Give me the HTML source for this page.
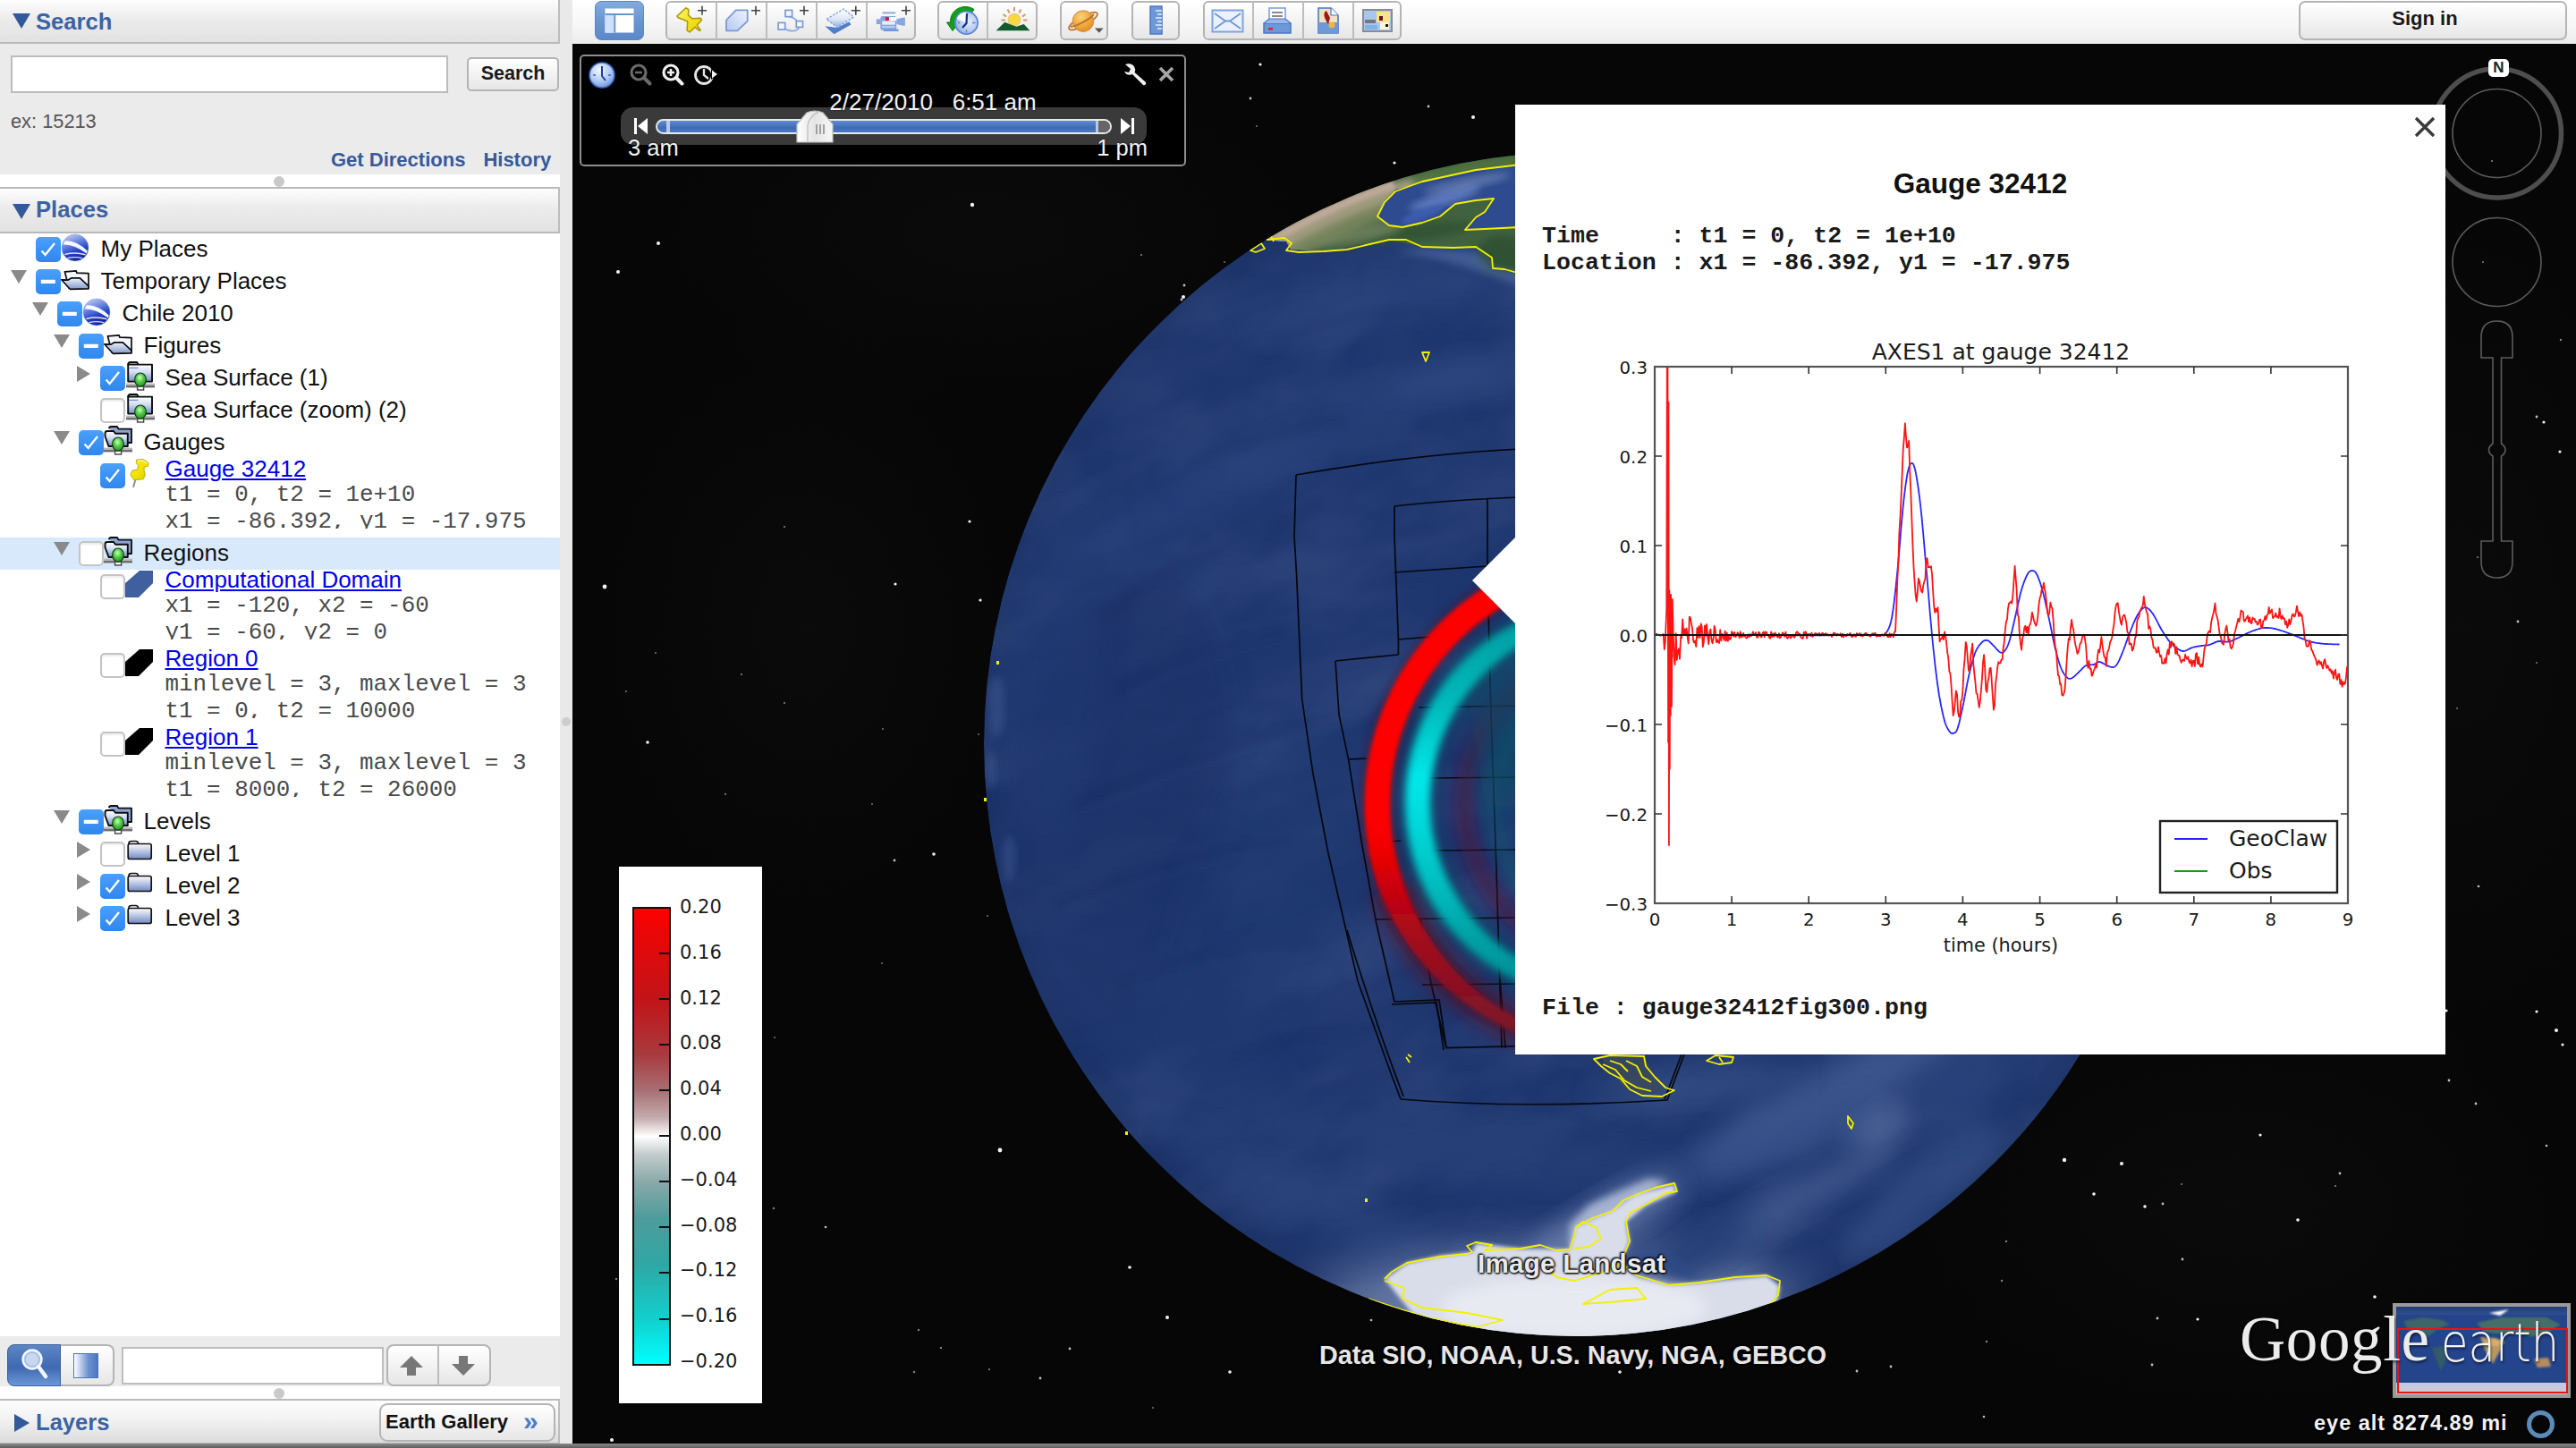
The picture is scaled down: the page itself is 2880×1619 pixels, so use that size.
<!DOCTYPE html>
<html lang="en"><head><meta charset="utf-8"><title>Google Earth</title>
<style>
*{box-sizing:border-box;margin:0;padding:0}
html,body{width:2880px;height:1619px;overflow:hidden;background:#050505}
body{position:relative;font-family:"Liberation Sans",sans-serif;color:#000}
.abs{position:absolute}
#left{position:absolute;left:0;top:0;width:626px;height:1615px;background:#fff;overflow:hidden}
#split{position:absolute;left:626px;top:0;width:14px;height:1615px;background:#e9e9e9}
#botline{position:absolute;left:0;top:1614px;width:2880px;height:5px;background:linear-gradient(#8a8a8a,#5e5e5e)}
.hdr{position:absolute;left:0;width:626px;background:linear-gradient(#fdfdfd,#ececec 45%,#e2e2e2);border-bottom:2px solid #b9b9b9;border-right:2px solid #bdbdbd}
.hdr .t{position:absolute;left:40px;font-weight:bold;color:#3b62a3;font-size:25.6px;letter-spacing:0}
.tri-d{position:absolute;width:0;height:0;border-left:10px solid transparent;border-right:10px solid transparent;border-top:17px solid #34599a}
.tri-r{position:absolute;width:0;height:0;border-top:10px solid transparent;border-bottom:10px solid transparent;border-left:17px solid #34599a}
.btn{position:absolute;border:2px solid #b4b4b4;border-radius:8px;background:linear-gradient(#ffffff,#f3f3f3 50%,#e6e6e6);}
.row{position:absolute;left:0;height:36px;font-size:26px;line-height:36px;white-space:nowrap;color:#111}
.mono{position:absolute;font-family:"Liberation Mono",monospace;font-size:25.9px;line-height:30px;color:#4a4a4a;white-space:pre;overflow:hidden}
.lnk{color:#0000ee;text-decoration:underline}
.cb{position:absolute;width:28px;height:28px;border-radius:5px}
.cb.on{background:linear-gradient(#4aa0fb,#2f86ee);}
.cb.off{background:#fff;border:2px solid #c4c4c4;box-shadow:inset 0 2px 2px rgba(0,0,0,.08)}
.tg{position:absolute;width:0;height:0}
.tg.d{border-left:9px solid transparent;border-right:9px solid transparent;border-top:15px solid #8a8a8a}
.tg.r{border-top:9px solid transparent;border-bottom:9px solid transparent;border-left:15px solid #8a8a8a}
#topbar{position:absolute;left:640px;top:0;width:2240px;height:49px;background:linear-gradient(#ffffff,#f6f6f6 60%,#ececec)}
#view{position:absolute;left:640px;top:49px;width:2240px;height:1566px;background:#060606;overflow:hidden}
</style></head>
<body>
<div id="view"><div class="abs" style="left:-640px;top:-49px;width:2880px;height:1619px">
<svg class="abs" style="left:0;top:0" width="2880" height="1619" viewBox="0 0 2880 1619"><defs><radialGradient id="neb" cx="0.5" cy="0.5" r="0.5"><stop offset="0" stop-color="#1a1a1a"/><stop offset="1" stop-color="#1a1a1a" stop-opacity="0"/></radialGradient></defs><ellipse cx="2750" cy="700" rx="260" ry="520" fill="url(#neb)" opacity=".22"/><ellipse cx="1100" cy="260" rx="420" ry="200" fill="url(#neb)" opacity=".22"/><ellipse cx="2500" cy="1350" rx="420" ry="260" fill="url(#neb)" opacity=".22"/><ellipse cx="900" cy="700" rx="260" ry="360" fill="url(#neb)" opacity=".22"/><circle cx="1087" cy="229" r="2.2" fill="#fff" opacity="0.95"/><circle cx="736" cy="272" r="2" fill="#fff" opacity="0.95"/><circle cx="691" cy="304" r="2" fill="#fff" opacity="0.95"/><circle cx="1323" cy="332" r="2" fill="#fff" opacity="0.95"/><circle cx="894" cy="76" r="1.6" fill="#fff" opacity="0.95"/><circle cx="1409" cy="72" r="1.6" fill="#fff" opacity="0.95"/><circle cx="1647" cy="131" r="2" fill="#fff" opacity="0.95"/><circle cx="676" cy="656" r="2.4" fill="#fff" opacity="0.95"/><circle cx="724" cy="830" r="1.8" fill="#fff" opacity="0.95"/><circle cx="1118" cy="1286" r="2.4" fill="#fff" opacity="0.95"/><circle cx="1305" cy="1473" r="2" fill="#fff" opacity="0.95"/><circle cx="1375" cy="1534" r="1.8" fill="#fff" opacity="0.95"/><circle cx="684" cy="1610" r="2" fill="#fff" opacity="0.95"/><circle cx="1526" cy="1297" r="1.8" fill="#fff" opacity="0.95"/><circle cx="1959" cy="1349" r="1.6" fill="#fff" opacity="0.95"/><circle cx="2527" cy="1269" r="1.6" fill="#fff" opacity="0.95"/><circle cx="2569" cy="1364" r="1.8" fill="#fff" opacity="0.95"/><circle cx="2655" cy="1450" r="1.8" fill="#fff" opacity="0.95"/><circle cx="2865" cy="1168" r="1.6" fill="#fff" opacity="0.95"/><circle cx="2862" cy="505" r="1.6" fill="#fff" opacity="0.95"/><circle cx="2844" cy="472" r="1.6" fill="#fff" opacity="0.95"/><circle cx="1001" cy="653" r="1.6" fill="#fff" opacity="0.95"/><circle cx="1084" cy="583" r="1.6" fill="#fff" opacity="0.95"/><circle cx="1096" cy="671" r="1.6" fill="#fff" opacity="0.95"/><circle cx="1044" cy="955" r="1.8" fill="#fff" opacity="0.95"/><circle cx="1000" cy="962" r="1.4" fill="#fff" opacity="0.75"/><circle cx="1263" cy="1417" r="1.8" fill="#fff" opacity="0.95"/><circle cx="1196" cy="1508" r="1.4" fill="#fff" opacity="0.75"/><circle cx="1163" cy="1541" r="1.4" fill="#fff" opacity="0.75"/><circle cx="2308" cy="1297" r="2.2" fill="#fff" opacity="0.95"/><circle cx="2372" cy="1301" r="2" fill="#fff" opacity="0.95"/><circle cx="2341" cy="1335" r="1.8" fill="#fff" opacity="0.95"/><circle cx="2398" cy="1349" r="1.8" fill="#fff" opacity="0.95"/><circle cx="2418" cy="1346" r="1.4" fill="#fff" opacity="0.75"/><circle cx="2440" cy="1408" r="1.4" fill="#fff" opacity="0.75"/><circle cx="2457" cy="1475" r="1.6" fill="#fff" opacity="0.95"/><circle cx="2735" cy="1130" r="1.6" fill="#fff" opacity="0.95"/><circle cx="2836" cy="1131" r="1.6" fill="#fff" opacity="0.95"/><circle cx="2858" cy="1152" r="2" fill="#fff" opacity="0.95"/><circle cx="2616" cy="1312" r="1.4" fill="#fff" opacity="0.75"/><circle cx="2738" cy="1208" r="1.4" fill="#fff" opacity="0.75"/><circle cx="2768" cy="1234" r="1.4" fill="#fff" opacity="0.75"/><circle cx="2412" cy="1474" r="1.4" fill="#fff" opacity="0.75"/><circle cx="2406" cy="1526" r="1.4" fill="#fff" opacity="0.75"/><circle cx="1811" cy="1534" r="1.8" fill="#fff" opacity="0.95"/><circle cx="2076" cy="1533" r="1.4" fill="#fff" opacity="0.75"/><circle cx="2114" cy="1528" r="1.4" fill="#fff" opacity="0.75"/><circle cx="2221" cy="1500" r="1.2" fill="#fff" opacity="0.5"/><circle cx="2243" cy="1388" r="1.2" fill="#fff" opacity="0.5"/><circle cx="2238" cy="1432" r="1.2" fill="#fff" opacity="0.5"/><circle cx="1027" cy="1487" r="1.2" fill="#fff" opacity="0.5"/><circle cx="1052" cy="1507" r="1.2" fill="#fff" opacity="0.5"/><circle cx="1022" cy="1534" r="1.2" fill="#fff" opacity="0.5"/><circle cx="865" cy="1351" r="1.2" fill="#fff" opacity="0.5"/><circle cx="689" cy="1430" r="1.2" fill="#fff" opacity="0.5"/><circle cx="1398" cy="110" r="1.4" fill="#fff" opacity="0.75"/><circle cx="1597" cy="119" r="1.4" fill="#fff" opacity="0.75"/><circle cx="1559" cy="182" r="1.6" fill="#fff" opacity="0.95"/><circle cx="1324" cy="319" r="1.4" fill="#fff" opacity="0.75"/><circle cx="1321" cy="335" r="1.4" fill="#fff" opacity="0.75"/><circle cx="2863" cy="380" r="1.2" fill="#fff" opacity="0.5"/><circle cx="2836" cy="466" r="1.4" fill="#fff" opacity="0.75"/><circle cx="2815" cy="695" r="1.4" fill="#fff" opacity="0.75"/><circle cx="1369" cy="293" r="0.9" fill="#fff" opacity="0.5"/><circle cx="811" cy="888" r="1.1" fill="#fff" opacity="0.5"/><circle cx="1944" cy="1465" r="1" fill="#fff" opacity="0.5"/><circle cx="733" cy="730" r="0.9" fill="#fff" opacity="0.5"/><circle cx="1184" cy="911" r="0.9" fill="#fff" opacity="0.5"/><circle cx="2486" cy="251" r="1" fill="#fff" opacity="0.5"/><circle cx="2050" cy="961" r="0.9" fill="#fff" opacity="0.5"/><circle cx="1931" cy="673" r="1" fill="#fff" opacity="0.5"/><circle cx="753" cy="1386" r="1.1" fill="#fff" opacity="0.5"/><circle cx="1580" cy="895" r="1.1" fill="#fff" opacity="0.5"/><circle cx="1894" cy="1114" r="0.9" fill="#fff" opacity="0.5"/><circle cx="1941" cy="1047" r="1.1" fill="#fff" opacity="0.5"/><circle cx="866" cy="1160" r="0.9" fill="#fff" opacity="0.5"/><circle cx="2024" cy="827" r="1.3" fill="#fff" opacity="0.75"/><circle cx="2375" cy="779" r="1.3" fill="#fff" opacity="0.75"/><circle cx="1453" cy="444" r="1" fill="#fff" opacity="0.5"/><circle cx="2202" cy="437" r="1.1" fill="#fff" opacity="0.5"/><circle cx="1816" cy="1412" r="1.3" fill="#fff" opacity="0.75"/><circle cx="1289" cy="1574" r="0.9" fill="#fff" opacity="0.5"/><circle cx="1786" cy="315" r="1.1" fill="#fff" opacity="0.5"/><circle cx="987" cy="815" r="0.9" fill="#fff" opacity="0.5"/><circle cx="2786" cy="180" r="1.1" fill="#fff" opacity="0.5"/><circle cx="1405" cy="601" r="1.3" fill="#fff" opacity="0.75"/><circle cx="1937" cy="765" r="0.9" fill="#fff" opacity="0.5"/><circle cx="2747" cy="792" r="0.9" fill="#fff" opacity="0.5"/><circle cx="785" cy="1144" r="1.3" fill="#fff" opacity="0.75"/><circle cx="1282" cy="656" r="1.1" fill="#fff" opacity="0.5"/><circle cx="700" cy="773" r="1" fill="#fff" opacity="0.5"/><circle cx="2006" cy="823" r="1" fill="#fff" opacity="0.5"/><circle cx="2355" cy="260" r="1" fill="#fff" opacity="0.5"/><circle cx="1533" cy="1476" r="1.3" fill="#fff" opacity="0.75"/><circle cx="829" cy="754" r="1.1" fill="#fff" opacity="0.5"/><circle cx="2611" cy="1326" r="1.1" fill="#fff" opacity="0.5"/><circle cx="2218" cy="1584" r="1.3" fill="#fff" opacity="0.75"/><circle cx="2776" cy="293" r="1" fill="#fff" opacity="0.5"/><circle cx="986" cy="1077" r="0.9" fill="#fff" opacity="0.5"/><circle cx="1727" cy="970" r="1.1" fill="#fff" opacity="0.5"/><circle cx="1276" cy="285" r="1.1" fill="#fff" opacity="0.5"/><circle cx="2004" cy="552" r="1" fill="#fff" opacity="0.5"/><circle cx="2183" cy="856" r="0.9" fill="#fff" opacity="0.5"/><circle cx="1664" cy="1406" r="1.3" fill="#fff" opacity="0.75"/><circle cx="1534" cy="669" r="1.3" fill="#fff" opacity="0.75"/><circle cx="2058" cy="156" r="0.9" fill="#fff" opacity="0.5"/><circle cx="2836" cy="741" r="0.9" fill="#fff" opacity="0.5"/><circle cx="1405" cy="141" r="0.9" fill="#fff" opacity="0.5"/><circle cx="1908" cy="889" r="1.1" fill="#fff" opacity="0.5"/><circle cx="2012" cy="169" r="1" fill="#fff" opacity="0.5"/><circle cx="2013" cy="290" r="1.1" fill="#fff" opacity="0.5"/><circle cx="2771" cy="991" r="1.3" fill="#fff" opacity="0.75"/><circle cx="923" cy="1372" r="1.3" fill="#fff" opacity="0.75"/><circle cx="1716" cy="542" r="1" fill="#fff" opacity="0.5"/><circle cx="877" cy="589" r="1.1" fill="#fff" opacity="0.5"/><circle cx="1713" cy="1129" r="0.9" fill="#fff" opacity="0.5"/><circle cx="1106" cy="1531" r="1.1" fill="#fff" opacity="0.5"/><circle cx="975" cy="899" r="0.9" fill="#fff" opacity="0.5"/><circle cx="2333" cy="521" r="0.9" fill="#fff" opacity="0.5"/><circle cx="2196" cy="463" r="1.1" fill="#fff" opacity="0.5"/><circle cx="2666" cy="610" r="1" fill="#fff" opacity="0.5"/><circle cx="1832" cy="1264" r="1.1" fill="#fff" opacity="0.5"/><circle cx="2063" cy="1007" r="1" fill="#fff" opacity="0.5"/><circle cx="2439" cy="1324" r="1" fill="#fff" opacity="0.5"/><circle cx="1094" cy="821" r="0.9" fill="#fff" opacity="0.5"/><circle cx="2847" cy="1281" r="1.3" fill="#fff" opacity="0.75"/><circle cx="1225" cy="1130" r="1.1" fill="#fff" opacity="0.5"/><circle cx="1643" cy="1508" r="1.1" fill="#fff" opacity="0.5"/><circle cx="2770" cy="623" r="1" fill="#fff" opacity="0.5"/><circle cx="877" cy="786" r="1.1" fill="#fff" opacity="0.5"/><circle cx="1104" cy="1024" r="0.9" fill="#fff" opacity="0.5"/><circle cx="1714" cy="1069" r="0.9" fill="#fff" opacity="0.5"/><circle cx="2503" cy="245" r="1.3" fill="#fff" opacity="0.75"/></svg>
<svg class="abs" style="left:0;top:0" width="2880" height="1619" viewBox="0 0 2880 1619">
<defs>
<clipPath id="gclip"><circle cx="1762" cy="832" r="662"/></clipPath>
<radialGradient id="ocean" cx="0.5" cy="0.5" r="0.5">
 <stop offset="0" stop-color="#1d356d"/><stop offset="0.75" stop-color="#1e366f"/><stop offset="0.95" stop-color="#1e366e"/><stop offset="1" stop-color="#1c3368"/>
</radialGradient>
<filter id="b2" x="-20%" y="-20%" width="140%" height="140%"><feGaussianBlur stdDeviation="2.2"/></filter>
<filter id="b4" x="-20%" y="-20%" width="140%" height="140%"><feGaussianBlur stdDeviation="4"/></filter>
<filter id="b8" x="-30%" y="-30%" width="160%" height="160%"><feGaussianBlur stdDeviation="8"/></filter>
<filter id="b14" x="-30%" y="-30%" width="160%" height="160%"><feGaussianBlur stdDeviation="14"/></filter>
<filter id="b30" x="-40%" y="-40%" width="180%" height="180%"><feGaussianBlur stdDeviation="30"/></filter>
<linearGradient id="redg" x1="0" y1="640" x2="0" y2="1180" gradientUnits="userSpaceOnUse">
 <stop offset="0" stop-color="#ff0000"/><stop offset="0.5" stop-color="#ff0000"/><stop offset="0.58" stop-color="#ee0002"/><stop offset="0.63" stop-color="#d40008"/><stop offset="0.7" stop-color="#b60616"/><stop offset="0.77" stop-color="#a00c1c"/><stop offset="0.85" stop-color="#8e1022"/><stop offset="0.92" stop-color="#801428"/><stop offset="1" stop-color="#741428"/>
</linearGradient>
<linearGradient id="cyg" x1="0" y1="700" x2="0" y2="1110" gradientUnits="userSpaceOnUse">
 <stop offset="0" stop-color="#00a3a6"/><stop offset="0.2" stop-color="#00bcbc"/><stop offset="0.42" stop-color="#00eeee"/><stop offset="0.62" stop-color="#00d2d2"/><stop offset="0.85" stop-color="#00a5a8"/><stop offset="1" stop-color="#008d95"/>
</linearGradient>
<linearGradient id="landg" x1="1400" y1="300" x2="1700" y2="200" gradientUnits="userSpaceOnUse">
 <stop offset="0" stop-color="#a89a82"/><stop offset="0.3" stop-color="#7f8663"/><stop offset="0.55" stop-color="#456643"/><stop offset="1" stop-color="#365c3a"/>
</linearGradient>
</defs>
<g clip-path="url(#gclip)">
<circle cx="1762" cy="832" r="662" fill="url(#ocean)"/>
<filter id="turb" x="0" y="0" width="100%" height="100%"><feTurbulence type="fractalNoise" baseFrequency="0.006 0.012" numOctaves="4" seed="5" result="n"/><feColorMatrix in="n" type="matrix" values="0 0 0 0 0.55  0 0 0 0 0.65  0 0 0 0 0.9  1.6 0 0 0 -0.62"/></filter>
<rect x="1100" y="170" width="1324" height="1324" filter="url(#turb)" opacity=".12" transform="rotate(-20 1762 832)"/>
<filter id="turb2" x="0" y="0" width="100%" height="100%"><feTurbulence type="fractalNoise" baseFrequency="0.008 0.016" numOctaves="3" seed="11" result="n"/><feColorMatrix in="n" type="matrix" values="0 0 0 0 0.03  0 0 0 0 0.06  0 0 0 0 0.2  1.8 0 0 0 -0.75"/></filter>
<rect x="1100" y="170" width="1324" height="1324" filter="url(#turb2)" opacity=".5" transform="rotate(-20 1762 832)"/>
<ellipse cx="1330" cy="560" rx="160" ry="30" transform="rotate(-25 1330 560)" fill="#2b4580" opacity="0.5" filter="url(#b14)"/>
<ellipse cx="1500" cy="470" rx="200" ry="28" transform="rotate(-20 1500 470)" fill="#2a447e" opacity="0.5" filter="url(#b14)"/>
<ellipse cx="1250" cy="900" rx="120" ry="260" transform="rotate(10 1250 900)" fill="#1c3268" opacity="0.5" filter="url(#b14)"/>
<ellipse cx="1420" cy="1000" rx="90" ry="200" transform="rotate(25 1420 1000)" fill="#1f376f" opacity="0.4" filter="url(#b14)"/>
<ellipse cx="1550" cy="330" rx="160" ry="30" transform="rotate(-12 1550 330)" fill="#2e4882" opacity="0.5" filter="url(#b14)"/>
<ellipse cx="1300" cy="1150" rx="200" ry="60" transform="rotate(40 1300 1150)" fill="#213a72" opacity="0.4" filter="url(#b14)"/>
<ellipse cx="1180" cy="760" rx="50" ry="200" transform="rotate(5 1180 760)" fill="#223b74" opacity="0.4" filter="url(#b14)"/>
<ellipse cx="1650" cy="420" rx="100" ry="24" transform="rotate(-5 1650 420)" fill="#314b84" opacity="0.5" filter="url(#b14)"/>
<ellipse cx="2050" cy="1225" rx="170" ry="34" transform="rotate(-28 2050 1225)" fill="#465f96" opacity="0.7" filter="url(#b14)"/>
<ellipse cx="2150" cy="1330" rx="110" ry="30" transform="rotate(-42 2150 1330)" fill="#39528a" opacity="0.6" filter="url(#b14)"/>
<ellipse cx="1950" cy="1290" rx="170" ry="26" transform="rotate(-18 1950 1290)" fill="#364f88" opacity="0.6" filter="url(#b14)"/>
<ellipse cx="2105" cy="1262" rx="40" ry="22" transform="rotate(-30 2105 1262)" fill="#6b80ae" opacity="0.55" filter="url(#b14)"/>
<ellipse cx="2000" cy="1345" rx="130" ry="22" transform="rotate(-28 2000 1345)" fill="#51699c" opacity="0.55" filter="url(#b14)"/>
<ellipse cx="1900" cy="1212" rx="120" ry="20" transform="rotate(-5 1900 1212)" fill="#39528a" opacity="0.55" filter="url(#b14)"/>
<ellipse cx="2190" cy="1215" rx="70" ry="40" transform="rotate(-50 2190 1215)" fill="#314a82" opacity="0.6" filter="url(#b14)"/>
<ellipse cx="1650" cy="1290" rx="240" ry="36" transform="rotate(8 1650 1290)" fill="#263f78" opacity="0.6" filter="url(#b14)"/>
<ellipse cx="1450" cy="1330" rx="160" ry="30" transform="rotate(25 1450 1330)" fill="#2a447e" opacity="0.5" filter="url(#b14)"/>
<path d="M1250 770 Q1350 720 1460 700" fill="none" stroke="#12224c" stroke-width="4" opacity=".22" filter="url(#b4)"/>
<path d="M1200 900 Q1340 840 1500 800" fill="none" stroke="#12224c" stroke-width="4" opacity=".22" filter="url(#b4)"/>
<path d="M1300 640 Q1400 600 1480 560" fill="none" stroke="#12224c" stroke-width="4" opacity=".22" filter="url(#b4)"/>
<path d="M1180 1010 Q1300 960 1440 940" fill="none" stroke="#12224c" stroke-width="4" opacity=".22" filter="url(#b4)"/>
<path d="M1250 1100 Q1350 1060 1470 1050" fill="none" stroke="#12224c" stroke-width="4" opacity=".22" filter="url(#b4)"/>
<path d="M1330 520 Q1420 480 1500 470" fill="none" stroke="#12224c" stroke-width="4" opacity=".22" filter="url(#b4)"/>
<path d="M1420 380 Q1500 350 1600 345" fill="none" stroke="#12224c" stroke-width="4" opacity=".22" filter="url(#b4)"/>
<path d="M1380 1180 Q1450 1150 1540 1150" fill="none" stroke="#12224c" stroke-width="4" opacity=".22" filter="url(#b4)"/>
<path d="M1230 690 Q1300 650 1350 600" fill="none" stroke="#12224c" stroke-width="4" opacity=".22" filter="url(#b4)"/>
<path d="M1500 640 Q1540 600 1600 590" fill="none" stroke="#12224c" stroke-width="4" opacity=".22" filter="url(#b4)"/>
<path d="M1260 778 Q1355 730 1462 708" fill="none" stroke="#3a548f" stroke-width="3" opacity=".2" filter="url(#b4)"/>
<path d="M1210 908 Q1345 850 1502 808" fill="none" stroke="#3a548f" stroke-width="3" opacity=".2" filter="url(#b4)"/>
<path d="M1190 1018 Q1305 968 1442 948" fill="none" stroke="#3a548f" stroke-width="3" opacity=".2" filter="url(#b4)"/>
<ellipse cx="1114" cy="790" rx="9" ry="34" fill="#5069a4" opacity=".35" filter="url(#b4)"/>
<ellipse cx="1128" cy="960" rx="8" ry="26" fill="#5069a4" opacity=".35" filter="url(#b4)"/>
<ellipse cx="1108" cy="860" rx="6" ry="20" fill="#5069a4" opacity=".35" filter="url(#b4)"/>
<path d="M1380 290 L1398 277 L1412 268 L1438 270 L1443 279 L1480 281 L1553 268 L1590 276 L1650 277 L1669 299 L1700 306 L1700 150 L1500 150 Z" fill="#41623f"/>
<ellipse cx="1560" cy="262" rx="90" ry="10" transform="rotate(-6 1560 262)" fill="#2f5030" opacity=".7" filter="url(#b4)"/>
<ellipse cx="1680" cy="285" rx="30" ry="22" fill="#2c4c2e" opacity=".7" filter="url(#b4)"/>
<ellipse cx="1520" cy="262" rx="50" ry="9" transform="rotate(-12 1520 262)" fill="#7d8c68" opacity=".7" filter="url(#b4)"/>
<clipPath id="landclip"><path d="M1380 290 L1398 277 L1412 268 L1438 270 L1443 279 L1480 281 L1553 268 L1590 276 L1650 277 L1669 299 L1700 306 L1700 150 L1500 150 Z"/></clipPath><g clip-path="url(#landclip)">
<path d="M1396.3 289.8 L1398.4 288.4 L1400.5 287.0 L1402.6 285.6 L1404.7 284.2 L1406.9 282.8 L1409.0 281.4 L1411.1 280.1 L1413.3 278.7 L1415.4 277.4 L1417.6 276.0 L1419.7 274.7 L1421.9 273.4 L1424.1 272.1 L1426.3 270.8 L1428.4 269.5 L1430.6 268.2 L1432.8 266.9 L1435.0 265.6 L1437.2 264.4 L1439.4 263.1 L1441.6 261.9 L1443.8 260.6 L1446.0 259.4 L1448.3 258.2 L1450.5 257.0 L1452.7 255.7 L1455.0 254.6 L1457.2 253.4 L1459.5 252.2 L1461.7 251.0 L1464.0 249.9 L1466.2 248.7 L1468.5 247.6 L1470.8 246.4 L1473.0 245.3 L1475.3 244.2 L1477.6 243.1 L1479.9 242.0 L1482.2 240.9 L1484.5 239.8 L1486.8 238.7 L1489.1 237.7 L1491.4 236.6 L1493.7 235.6 L1496.0 234.5 L1498.3 233.5 L1500.6 232.5 L1503.0 231.5 L1505.3 230.5 L1507.6 229.5 L1510.0 228.5 L1512.3 227.5 L1514.7 226.6 L1517.0 225.6 L1519.4 224.7 L1521.7 223.7 L1524.1 222.8 L1526.4 221.9 L1528.8 221.0 L1531.2 220.1 L1533.6 219.2 L1535.9 218.3 L1538.3 217.4 L1540.7 216.6 L1543.1 215.7 L1545.5 214.9 L1547.9 214.0 L1550.3 213.2 L1552.7 212.4 L1555.1 211.6 L1557.5 210.8 L1559.9 210.0 L1562.3 209.2 L1564.7 208.5 L1567.2 207.7 L1569.6 206.9 L1572.0 206.2 L1574.4 205.5 L1576.9 204.8 L1579.3 204.0 L1581.7 203.3 L1584.2 202.6 L1586.6 202.0 L1589.1 201.3 L1591.5 200.6 L1594.0 200.0 L1596.4 199.3 L1598.9 198.7 L1601.3 198.0 L1603.8 197.4 L1610.6 224.6 L1608.2 225.2 L1605.8 225.8 L1603.5 226.4 L1601.2 227.0 L1598.8 227.6 L1596.5 228.3 L1594.1 228.9 L1591.8 229.6 L1589.5 230.3 L1587.1 230.9 L1584.8 231.6 L1582.5 232.3 L1580.1 233.0 L1577.8 233.7 L1575.5 234.4 L1573.2 235.2 L1570.9 235.9 L1568.6 236.6 L1566.2 237.4 L1563.9 238.2 L1561.6 238.9 L1559.3 239.7 L1557.0 240.5 L1554.8 241.3 L1552.5 242.1 L1550.2 242.9 L1547.9 243.8 L1545.6 244.6 L1543.3 245.4 L1541.1 246.3 L1538.8 247.1 L1536.5 248.0 L1534.3 248.9 L1532.0 249.8 L1529.7 250.7 L1527.5 251.6 L1525.2 252.5 L1523.0 253.4 L1520.8 254.4 L1518.5 255.3 L1516.3 256.2 L1514.1 257.2 L1511.8 258.2 L1509.6 259.1 L1507.4 260.1 L1505.2 261.1 L1503.0 262.1 L1500.7 263.1 L1498.5 264.1 L1496.3 265.2 L1494.1 266.2 L1492.0 267.2 L1489.8 268.3 L1487.6 269.4 L1485.4 270.4 L1483.2 271.5 L1481.1 272.6 L1478.9 273.7 L1476.7 274.8 L1474.6 275.9 L1472.4 277.0 L1470.3 278.1 L1468.1 279.3 L1466.0 280.4 L1463.8 281.6 L1461.7 282.7 L1459.6 283.9 L1457.4 285.1 L1455.3 286.3 L1453.2 287.5 L1451.1 288.7 L1449.0 289.9 L1446.9 291.1 L1444.8 292.3 L1442.7 293.5 L1440.6 294.8 L1438.5 296.0 L1436.5 297.3 L1434.4 298.6 L1432.3 299.8 L1430.3 301.1 L1428.2 302.4 L1426.2 303.7 L1424.1 305.0 L1422.1 306.3 L1420.0 307.7 L1418.0 309.0 L1416.0 310.3 L1414.0 311.7 L1411.9 313.0 Z" fill="#7f8a62" opacity=".85" filter="url(#b4)"/>
<path d="M1402.5 278.5 L1404.4 277.3 L1406.2 276.1 L1408.0 274.9 L1409.9 273.8 L1411.7 272.6 L1413.6 271.5 L1415.4 270.3 L1417.3 269.2 L1419.1 268.1 L1421.0 266.9 L1422.8 265.8 L1424.7 264.7 L1426.6 263.6 L1428.5 262.5 L1430.3 261.4 L1432.2 260.3 L1434.1 259.2 L1436.0 258.1 L1437.9 257.1 L1439.8 256.0 L1441.7 254.9 L1443.6 253.9 L1445.5 252.8 L1447.4 251.8 L1449.3 250.8 L1451.2 249.7 L1453.2 248.7 L1455.1 247.7 L1457.0 246.7 L1459.0 245.7 L1460.9 244.7 L1462.8 243.7 L1464.8 242.7 L1466.7 241.7 L1468.7 240.8 L1470.6 239.8 L1472.6 238.9 L1474.5 237.9 L1476.5 237.0 L1478.4 236.0 L1480.4 235.1 L1482.4 234.2 L1484.3 233.2 L1486.3 232.3 L1488.3 231.4 L1490.3 230.5 L1492.3 229.6 L1494.3 228.7 L1496.2 227.9 L1498.2 227.0 L1500.2 226.1 L1502.2 225.3 L1504.2 224.4 L1506.2 223.6 L1508.2 222.7 L1510.3 221.9 L1512.3 221.1 L1514.3 220.3 L1516.3 219.4 L1518.3 218.6 L1520.3 217.8 L1522.4 217.0 L1524.4 216.3 L1526.4 215.5 L1528.5 214.7 L1530.5 213.9 L1532.5 213.2 L1534.6 212.4 L1536.6 211.7 L1538.7 210.9 L1540.7 210.2 L1542.8 209.5 L1544.8 208.8 L1546.9 208.0 L1548.9 207.3 L1551.0 206.6 L1553.1 205.9 L1555.1 205.3 L1557.2 204.6 L1559.3 203.9 L1561.3 203.2 L1563.4 202.6 L1565.5 201.9 L1567.6 201.3 L1569.6 200.7 L1571.7 200.0 L1573.8 199.4 L1575.9 198.8 L1578.0 198.2 L1580.1 197.6 L1585.0 214.9 L1583.0 215.5 L1581.0 216.1 L1578.9 216.7 L1576.9 217.3 L1574.9 217.9 L1572.9 218.5 L1570.8 219.1 L1568.8 219.8 L1566.8 220.4 L1564.8 221.0 L1562.8 221.7 L1560.8 222.4 L1558.8 223.0 L1556.8 223.7 L1554.8 224.4 L1552.7 225.1 L1550.8 225.8 L1548.8 226.5 L1546.8 227.2 L1544.8 227.9 L1542.8 228.6 L1540.8 229.3 L1538.8 230.0 L1536.8 230.8 L1534.8 231.5 L1532.9 232.3 L1530.9 233.0 L1528.9 233.8 L1526.9 234.6 L1525.0 235.4 L1523.0 236.1 L1521.0 236.9 L1519.1 237.7 L1517.1 238.5 L1515.2 239.3 L1513.2 240.2 L1511.3 241.0 L1509.3 241.8 L1507.4 242.7 L1505.4 243.5 L1503.5 244.3 L1501.6 245.2 L1499.6 246.1 L1497.7 246.9 L1495.8 247.8 L1493.8 248.7 L1491.9 249.6 L1490.0 250.5 L1488.1 251.4 L1486.2 252.3 L1484.3 253.2 L1482.4 254.1 L1480.5 255.0 L1478.6 256.0 L1476.7 256.9 L1474.8 257.8 L1472.9 258.8 L1471.0 259.7 L1469.1 260.7 L1467.2 261.7 L1465.3 262.7 L1463.5 263.6 L1461.6 264.6 L1459.7 265.6 L1457.9 266.6 L1456.0 267.6 L1454.1 268.6 L1452.3 269.7 L1450.4 270.7 L1448.6 271.7 L1446.7 272.7 L1444.9 273.8 L1443.1 274.8 L1441.2 275.9 L1439.4 276.9 L1437.6 278.0 L1435.7 279.1 L1433.9 280.2 L1432.1 281.3 L1430.3 282.3 L1428.5 283.4 L1426.7 284.5 L1424.9 285.6 L1423.1 286.8 L1421.3 287.9 L1419.5 289.0 L1417.7 290.1 L1415.9 291.3 L1414.1 292.4 L1412.3 293.6 Z" fill="#a79f84" opacity=".9" filter="url(#b4)"/>
<path d="M1410.7 269.7 L1412.2 268.8 L1413.7 267.8 L1415.3 266.9 L1416.8 266.0 L1418.3 265.0 L1419.9 264.1 L1421.4 263.2 L1423.0 262.2 L1424.5 261.3 L1426.1 260.4 L1427.6 259.5 L1429.2 258.6 L1430.7 257.7 L1432.3 256.8 L1433.8 255.9 L1435.4 255.0 L1437.0 254.1 L1438.5 253.3 L1440.1 252.4 L1441.7 251.5 L1443.3 250.6 L1444.9 249.8 L1446.4 248.9 L1448.0 248.1 L1449.6 247.2 L1451.2 246.4 L1452.8 245.5 L1454.4 244.7 L1456.0 243.9 L1457.6 243.0 L1459.2 242.2 L1460.8 241.4 L1462.4 240.6 L1464.0 239.8 L1465.6 238.9 L1467.2 238.1 L1468.8 237.3 L1470.4 236.6 L1472.1 235.8 L1473.7 235.0 L1475.3 234.2 L1476.9 233.4 L1478.5 232.6 L1480.2 231.9 L1481.8 231.1 L1483.4 230.4 L1485.1 229.6 L1486.7 228.9 L1488.3 228.1 L1490.0 227.4 L1491.6 226.6 L1493.3 225.9 L1494.9 225.2 L1496.6 224.5 L1498.2 223.7 L1499.9 223.0 L1501.5 222.3 L1503.2 221.6 L1504.8 220.9 L1506.5 220.2 L1508.2 219.5 L1509.8 218.8 L1511.5 218.1 L1513.2 217.5 L1514.8 216.8 L1516.5 216.1 L1518.2 215.5 L1519.8 214.8 L1521.5 214.1 L1523.2 213.5 L1524.9 212.9 L1526.6 212.2 L1528.2 211.6 L1529.9 210.9 L1531.6 210.3 L1533.3 209.7 L1535.0 209.1 L1536.7 208.5 L1538.4 207.8 L1540.1 207.2 L1541.8 206.6 L1543.5 206.0 L1545.2 205.5 L1546.9 204.9 L1548.6 204.3 L1550.3 203.7 L1552.0 203.1 L1553.7 202.6 L1555.4 202.0 L1557.1 201.4 L1560.2 211.0 L1558.5 211.5 L1556.8 212.1 L1555.2 212.6 L1553.5 213.2 L1551.8 213.8 L1550.1 214.3 L1548.4 214.9 L1546.8 215.5 L1545.1 216.1 L1543.4 216.7 L1541.8 217.3 L1540.1 217.9 L1538.4 218.5 L1536.8 219.1 L1535.1 219.7 L1533.4 220.3 L1531.8 220.9 L1530.1 221.6 L1528.5 222.2 L1526.8 222.8 L1525.2 223.5 L1523.5 224.1 L1521.9 224.8 L1520.2 225.4 L1518.6 226.1 L1516.9 226.7 L1515.3 227.4 L1513.6 228.1 L1512.0 228.8 L1510.4 229.4 L1508.7 230.1 L1507.1 230.8 L1505.5 231.5 L1503.8 232.2 L1502.2 232.9 L1500.6 233.6 L1498.9 234.3 L1497.3 235.0 L1495.7 235.8 L1494.1 236.5 L1492.5 237.2 L1490.9 238.0 L1489.2 238.7 L1487.6 239.4 L1486.0 240.2 L1484.4 240.9 L1482.8 241.7 L1481.2 242.4 L1479.6 243.2 L1478.0 244.0 L1476.4 244.8 L1474.8 245.5 L1473.2 246.3 L1471.7 247.1 L1470.1 247.9 L1468.5 248.7 L1466.9 249.5 L1465.3 250.3 L1463.7 251.1 L1462.2 251.9 L1460.6 252.7 L1459.0 253.5 L1457.4 254.4 L1455.9 255.2 L1454.3 256.0 L1452.8 256.9 L1451.2 257.7 L1449.6 258.6 L1448.1 259.4 L1446.5 260.3 L1445.0 261.1 L1443.4 262.0 L1441.9 262.8 L1440.3 263.7 L1438.8 264.6 L1437.3 265.5 L1435.7 266.4 L1434.2 267.2 L1432.7 268.1 L1431.1 269.0 L1429.6 269.9 L1428.1 270.8 L1426.5 271.7 L1425.0 272.7 L1423.5 273.6 L1422.0 274.5 L1420.5 275.4 L1419.0 276.4 L1417.5 277.3 L1416.0 278.2 Z" fill="#c2ab9c" opacity=".95" filter="url(#b2)"/>
<path d="M1579.8 196.6 L1581.0 196.3 L1582.3 195.9 L1583.5 195.6 L1584.7 195.2 L1586.0 194.9 L1587.2 194.5 L1588.4 194.2 L1589.7 193.9 L1590.9 193.5 L1592.2 193.2 L1593.4 192.9 L1594.6 192.5 L1595.9 192.2 L1597.1 191.9 L1598.4 191.6 L1599.6 191.3 L1600.8 190.9 L1602.1 190.6 L1603.3 190.3 L1604.6 190.0 L1605.8 189.7 L1607.1 189.4 L1608.3 189.1 L1609.6 188.8 L1610.8 188.5 L1612.1 188.2 L1613.3 187.9 L1614.6 187.7 L1615.8 187.4 L1617.1 187.1 L1618.3 186.8 L1619.6 186.5 L1620.8 186.3 L1622.1 186.0 L1623.3 185.7 L1624.6 185.4 L1625.8 185.2 L1627.1 184.9 L1628.3 184.7 L1629.6 184.4 L1630.8 184.1 L1632.1 183.9 L1633.4 183.6 L1634.6 183.4 L1635.9 183.1 L1637.1 182.9 L1638.4 182.7 L1639.7 182.4 L1640.9 182.2 L1642.2 182.0 L1643.4 181.7 L1644.7 181.5 L1646.0 181.3 L1647.2 181.0 L1648.5 180.8 L1649.7 180.6 L1651.0 180.4 L1652.3 180.2 L1653.5 180.0 L1654.8 179.8 L1656.1 179.5 L1657.3 179.3 L1658.6 179.1 L1659.9 178.9 L1661.1 178.7 L1662.4 178.5 L1663.7 178.4 L1664.9 178.2 L1666.2 178.0 L1667.5 177.8 L1668.7 177.6 L1670.0 177.4 L1671.3 177.3 L1672.5 177.1 L1673.8 176.9 L1675.1 176.7 L1676.4 176.6 L1677.6 176.4 L1678.9 176.2 L1680.2 176.1 L1681.4 175.9 L1682.7 175.8 L1684.0 175.6 L1685.3 175.5 L1686.5 175.3 L1687.8 175.2 L1689.1 175.0 L1690.4 174.9 L1691.6 174.8 L1692.9 174.6 L1694.2 186.6 L1692.9 186.7 L1691.7 186.8 L1690.4 187.0 L1689.2 187.1 L1687.9 187.2 L1686.7 187.4 L1685.4 187.5 L1684.2 187.7 L1682.9 187.8 L1681.7 188.0 L1680.4 188.1 L1679.2 188.3 L1677.9 188.5 L1676.7 188.6 L1675.4 188.8 L1674.2 189.0 L1672.9 189.1 L1671.7 189.3 L1670.4 189.5 L1669.2 189.7 L1667.9 189.9 L1666.7 190.0 L1665.4 190.2 L1664.2 190.4 L1663.0 190.6 L1661.7 190.8 L1660.5 191.0 L1659.2 191.2 L1658.0 191.4 L1656.7 191.6 L1655.5 191.8 L1654.3 192.0 L1653.0 192.2 L1651.8 192.4 L1650.5 192.6 L1649.3 192.9 L1648.1 193.1 L1646.8 193.3 L1645.6 193.5 L1644.3 193.8 L1643.1 194.0 L1641.9 194.2 L1640.6 194.4 L1639.4 194.7 L1638.2 194.9 L1636.9 195.2 L1635.7 195.4 L1634.5 195.7 L1633.2 195.9 L1632.0 196.2 L1630.8 196.4 L1629.5 196.7 L1628.3 196.9 L1627.1 197.2 L1625.8 197.4 L1624.6 197.7 L1623.4 198.0 L1622.1 198.2 L1620.9 198.5 L1619.7 198.8 L1618.5 199.1 L1617.2 199.4 L1616.0 199.6 L1614.8 199.9 L1613.6 200.2 L1612.3 200.5 L1611.1 200.8 L1609.9 201.1 L1608.7 201.4 L1607.4 201.7 L1606.2 202.0 L1605.0 202.3 L1603.8 202.6 L1602.6 202.9 L1601.3 203.2 L1600.1 203.5 L1598.9 203.8 L1597.7 204.1 L1596.5 204.5 L1595.2 204.8 L1594.0 205.1 L1592.8 205.4 L1591.6 205.8 L1590.4 206.1 L1589.2 206.4 L1588.0 206.8 L1586.7 207.1 L1585.5 207.5 L1584.3 207.8 L1583.1 208.1 Z" fill="#56793f" opacity=".8" filter="url(#b4)"/>
<ellipse cx="1422" cy="276" rx="16" ry="7" transform="rotate(-25 1422 276)" fill="#8e93a4" opacity=".8" filter="url(#b2)"/>
</g>
<path d="M1540 242 L1548 224 L1560 212 L1627 195 L1700 183 L1700 252 L1638 257 L1650 243 L1660 237 L1670 222 L1627 228 L1610 242 L1568 254 L1553 252 Z" fill="#2d4b8e"/>
<ellipse cx="1615" cy="222" rx="42" ry="7" transform="rotate(-17 1615 222)" fill="#6f8ad0" opacity=".75" filter="url(#b4)"/>
<ellipse cx="1640" cy="205" rx="50" ry="6" transform="rotate(-12 1640 205)" fill="#7f93c0" opacity=".6" filter="url(#b4)"/>
<ellipse cx="1590" cy="240" rx="26" ry="6" transform="rotate(-20 1590 240)" fill="#3f5fb4" opacity=".8" filter="url(#b2)"/>
<path d="M1560 280 Q1620 290 1668 308 L1700 320 L1700 306 L1669 299 L1650 280 L1590 279 Z" fill="#5a77b0" opacity=".55" filter="url(#b4)"/>
<ellipse cx="1740" cy="1460" rx="270" ry="62" fill="#8c9dc4" opacity=".7" filter="url(#b30)"/>
<ellipse cx="1790" cy="1368" rx="95" ry="26" transform="rotate(-30 1790 1368)" fill="#7388b6" opacity=".7" filter="url(#b14)"/><path d="M1755 1369 L1777 1347 L1810 1332 L1843 1318 L1865 1321 L1817 1354 L1803 1384 L1755 1398 Z" fill="#b4bfda" opacity=".85" filter="url(#b4)"/><ellipse cx="1905" cy="1395" rx="60" ry="26" transform="rotate(-35 1905 1395)" fill="#1f376f" opacity=".7" filter="url(#b14)"/>
<path d="M1548 1430 L1573 1412 L1610 1404 L1646 1400 L1650 1390 L1700 1396 L1755 1397 L1762 1372 L1803 1354 L1829 1336 L1872 1324 L1874 1333 L1840 1348 L1818 1366 L1822 1388 L1812 1412 L1830 1428 L1866 1437 L1920 1432 L1975 1426 L1990 1438 L1985 1470 L1900 1520 L1700 1520 L1580 1470 Z" fill="#d9dde9" filter="url(#b2)"/>
<ellipse cx="1760" cy="1462" rx="150" ry="34" fill="#e9ebf3" opacity=".9" filter="url(#b8)"/>
<path d="M1812 1412 Q1850 1380 1900 1430 Z" fill="#2c4888" opacity=".7" filter="url(#b4)"/>
<path d="M1790 1182 L1838 1181 L1848 1200 L1862 1218 L1835 1224 L1815 1215 L1800 1198 Z" fill="#3c4a5a" opacity=".8"/>
<path d="M1449 531 Q1580 508 1700 502" fill="none" stroke="#05070c" stroke-width="1.7"/>
<path d="M1449 531 L1447 600 L1449.5 641 L1455.7 782 L1468 865 L1484.6 952 L1518 1097 L1555 1200 L1566 1229" fill="none" stroke="#05070c" stroke-width="1.7"/>
<path d="M1506 1040 Q1533 1130 1569 1226" fill="none" stroke="#05070c" stroke-width="1.7"/>
<path d="M1566 1229 Q1700 1240 1864 1230 L1883 1179" fill="none" stroke="#05070c" stroke-width="1.7"/>
<path d="M1861 1229 L1880 1179" fill="none" stroke="#05070c" stroke-width="1.7"/>
<path d="M1559 566 Q1620 559 1700 556" fill="none" stroke="#05070c" stroke-width="1.7"/>
<path d="M1559 566 L1559 600 L1563.4 716 L1563.4 732" fill="none" stroke="#05070c" stroke-width="1.7"/>
<path d="M1559 640 L1663 633" fill="none" stroke="#05070c" stroke-width="1.7"/>
<path d="M1663 557 L1663 640 L1667 799 L1673 973 L1679 1172" fill="none" stroke="#05070c" stroke-width="1.7"/>
<path d="M1677 1095 L1683 1172" fill="none" stroke="#05070c" stroke-width="1.7"/>
<path d="M1563 715 L1600 712" fill="none" stroke="#05070c" stroke-width="1.7"/>
<path d="M1493 739 L1563.4 732" fill="none" stroke="#05070c" stroke-width="1.7"/>
<path d="M1493 739 L1497 799 L1507.5 848.6 L1522 940 L1538.5 1031 L1559 1120" fill="none" stroke="#05070c" stroke-width="1.7"/>
<path d="M1559 1120 L1609 1118 L1617 1171.7 L1700 1169.6" fill="none" stroke="#05070c" stroke-width="1.7"/>
<path d="M1556 1123 L1606 1121 L1614 1174" fill="none" stroke="#05070c" stroke-width="1.7"/>
<path d="M1586 791 L1700 789" fill="none" stroke="#05070c" stroke-width="1.7"/>
<path d="M1598 870 L1700 869" fill="none" stroke="#05070c" stroke-width="1.7"/>
<path d="M1552 941 L1566 940" fill="none" stroke="#05070c" stroke-width="1.7"/>
<path d="M1600 951 L1700 950" fill="none" stroke="#05070c" stroke-width="1.7"/>
<path d="M1538 1028 L1700 1026" fill="none" stroke="#05070c" stroke-width="1.7"/>
<path d="M1590 1101 L1700 1100" fill="none" stroke="#05070c" stroke-width="1.7"/>
<path d="M1507 849 L1528 848" fill="none" stroke="#05070c" stroke-width="1.7"/>
<path d="M1588 1028 L1600 1100 L1617 1172" fill="none" stroke="#05070c" stroke-width="1.7"/>
<clipPath id="wclip"><rect x="1000" y="500" width="702" height="682"/></clipPath>
<g clip-path="url(#wclip)">
<circle cx="1805" cy="900" r="168" fill="none" stroke="#5a1030" stroke-width="20" opacity=".5" filter="url(#b8)"/>
<circle cx="1805" cy="900" r="135" fill="none" stroke="#0a5a70" stroke-width="18" opacity=".5" filter="url(#b8)"/>
<path d="M1640 760 Q1700 700 1760 740 L1760 900 L1660 900 Z" fill="#0a4a66" opacity=".65" filter="url(#b14)"/>
<path d="M1530.0 1003.0 L1531.3 1006.3 L1532.6 1009.5 L1534.0 1012.7 L1535.4 1015.9 L1536.9 1019.1 L1538.4 1022.3 L1539.9 1025.4 L1541.5 1028.5 L1543.1 1031.6 L1544.8 1034.7 L1546.4 1037.8 L1548.1 1040.8 L1549.9 1043.8 L1551.7 1046.8 L1553.5 1049.8 L1555.3 1052.8 L1557.2 1055.7 L1559.1 1058.6 L1561.1 1061.5 L1563.1 1064.4 L1565.1 1067.2 L1567.1 1070.0 L1569.2 1072.8 L1571.3 1075.6 L1573.5 1078.3 L1575.6 1081.0 L1577.9 1083.7 L1580.1 1086.4 L1582.4 1089.0 L1584.6 1091.6 L1587.0 1094.2 L1589.3 1096.7 L1591.7 1099.3 L1594.1 1101.7 L1596.6 1104.2 L1599.0 1106.6 L1601.5 1109.0 L1604.0 1111.4 L1606.6 1113.8 L1609.2 1116.1 L1611.7 1118.4 L1614.4 1120.6 L1617.0 1122.8 L1619.7 1125.0 L1622.4 1127.2 L1625.1 1129.3 L1627.8 1131.4 L1630.6 1133.4 L1633.4 1135.5 L1636.2 1137.5 L1639.0 1139.4 L1641.9 1141.4 L1644.8 1143.2 L1647.7 1145.1 L1650.6 1146.9 L1653.5 1148.7 L1656.4 1150.5 L1659.4 1152.3 L1662.4 1154.0 L1665.4 1155.7 L1668.4 1157.4 L1671.4 1159.0 L1674.5 1160.6 L1677.5 1162.1 L1680.6 1163.6 L1683.7 1165.1 L1686.8 1166.5 L1689.9 1168.0 L1693.1 1169.3 L1696.3 1170.7 L1699.4 1171.9 L1702.6 1173.2 L1705.8 1174.4 L1709.0 1175.6 L1712.3 1176.7 L1715.5 1177.9 L1718.8 1178.9 L1722.0 1180.0 L1725.3 1181.0 L1728.6 1182.0 L1731.9 1182.9 L1735.2 1183.8 L1738.5 1184.6 L1741.8 1185.5 L1745.2 1186.2 L1748.5 1187.0 L1751.9 1187.7 L1755.2 1188.3 L1758.6 1189.0 L1761.9 1189.5 L1769.2 1148.2 L1766.4 1147.6 L1763.5 1147.0 L1760.6 1146.4 L1757.8 1145.7 L1754.9 1145.0 L1752.1 1144.3 L1749.3 1143.6 L1746.4 1142.8 L1743.6 1141.9 L1740.8 1141.1 L1738.0 1140.2 L1735.3 1139.3 L1732.5 1138.3 L1729.7 1137.3 L1727.0 1136.3 L1724.3 1135.3 L1721.5 1134.2 L1718.8 1133.0 L1716.2 1131.9 L1713.5 1130.7 L1710.8 1129.5 L1708.2 1128.2 L1705.6 1126.9 L1703.0 1125.6 L1700.4 1124.3 L1697.8 1122.9 L1695.2 1121.5 L1692.7 1120.1 L1690.1 1118.6 L1687.6 1117.1 L1685.1 1115.6 L1682.7 1114.1 L1680.2 1112.5 L1677.8 1110.9 L1675.4 1109.2 L1673.0 1107.5 L1670.7 1105.8 L1668.3 1104.1 L1666.0 1102.3 L1663.7 1100.5 L1661.5 1098.7 L1659.2 1096.8 L1657.0 1094.9 L1654.8 1093.0 L1652.7 1091.1 L1650.5 1089.1 L1648.4 1087.2 L1646.3 1085.2 L1644.2 1083.1 L1642.2 1081.1 L1640.1 1079.0 L1638.1 1076.9 L1636.2 1074.8 L1634.2 1072.6 L1632.3 1070.5 L1630.4 1068.3 L1628.5 1066.1 L1626.7 1063.9 L1624.9 1061.6 L1623.1 1059.4 L1621.3 1057.1 L1619.6 1054.8 L1617.9 1052.4 L1616.2 1050.1 L1614.6 1047.7 L1612.9 1045.3 L1611.4 1043.0 L1609.8 1040.5 L1608.3 1038.1 L1606.7 1035.7 L1605.3 1033.2 L1603.8 1030.7 L1602.4 1028.2 L1601.0 1025.7 L1599.7 1023.2 L1598.3 1020.6 L1597.0 1018.1 L1595.8 1015.5 L1594.5 1012.9 L1593.3 1010.3 L1592.1 1007.7 L1591.0 1005.1 L1589.9 1002.5 L1588.8 999.8 L1587.7 997.2 L1586.7 994.5 L1585.7 991.8 L1584.8 989.1 L1583.8 986.4 L1583.0 983.7 Z" fill="#5a0a20" opacity=".45" filter="url(#b8)"/>
<path d="M1703.4 628.8 L1695.7 632.1 L1688.0 635.5 L1680.5 639.2 L1673.1 643.1 L1665.8 647.3 L1658.6 651.6 L1651.5 656.1 L1644.6 660.9 L1637.8 665.8 L1631.1 670.9 L1624.6 676.2 L1618.3 681.7 L1612.1 687.4 L1606.1 693.3 L1600.2 699.3 L1594.6 705.5 L1589.1 711.8 L1583.8 718.3 L1578.7 725.0 L1573.7 731.8 L1569.0 738.7 L1564.5 745.8 L1560.1 753.0 L1556.0 760.3 L1552.1 767.7 L1548.4 775.3 L1545.0 782.9 L1541.7 790.6 L1538.7 798.5 L1535.9 806.4 L1533.3 814.4 L1531.0 822.4 L1528.9 830.6 L1527.0 838.7 L1525.3 847.0 L1523.9 855.3 L1522.8 863.6 L1521.9 871.9 L1521.2 880.3 L1520.7 888.7 L1520.5 897.1 L1520.6 905.4 L1520.8 913.8 L1521.3 922.2 L1522.1 930.6 L1523.1 938.9 L1524.3 947.2 L1525.8 955.5 L1527.5 963.7 L1529.5 971.9 L1531.6 980.0 L1534.1 988.0 L1536.9 995.9 L1540.0 1003.7 L1543.3 1011.4 L1546.8 1019.0 L1550.6 1026.5 L1554.5 1033.8 L1558.7 1041.1 L1563.1 1048.2 L1567.7 1055.2 L1572.4 1062.0 L1577.4 1068.7 L1582.5 1075.2 L1587.8 1081.6 L1593.3 1087.8 L1599.0 1093.9 L1604.9 1099.8 L1610.9 1105.5 L1617.0 1111.0 L1623.3 1116.4 L1629.7 1121.5 L1636.3 1126.5 L1643.0 1131.3 L1649.9 1135.8 L1656.9 1140.2 L1663.9 1144.5 L1671.0 1148.6 L1678.3 1152.4 L1685.6 1156.1 L1693.1 1159.5 L1700.6 1162.7 L1708.3 1165.7 L1716.0 1168.5 L1723.8 1171.1 L1731.6 1173.5 L1739.5 1175.6 L1747.5 1177.5 L1755.5 1179.2 L1763.5 1180.7 L1767.7 1157.0 L1760.3 1155.5 L1753.0 1153.9 L1745.8 1151.9 L1738.6 1149.8 L1731.5 1147.5 L1724.5 1145.0 L1717.5 1142.2 L1710.7 1139.3 L1703.9 1136.1 L1697.2 1132.8 L1690.6 1129.3 L1684.2 1125.6 L1677.8 1121.7 L1671.6 1117.6 L1665.5 1113.2 L1659.6 1108.7 L1653.9 1104.0 L1648.2 1099.2 L1642.7 1094.2 L1637.4 1089.0 L1632.2 1083.7 L1627.2 1078.3 L1622.4 1072.7 L1617.7 1067.0 L1613.2 1061.2 L1608.8 1055.2 L1604.7 1049.2 L1600.7 1043.0 L1596.9 1036.7 L1593.3 1030.3 L1589.8 1023.8 L1586.6 1017.2 L1583.6 1010.6 L1580.7 1003.8 L1578.1 997.0 L1575.6 990.2 L1573.4 983.2 L1571.2 976.3 L1569.2 969.3 L1567.3 962.3 L1565.6 955.2 L1564.1 948.1 L1562.8 940.9 L1561.8 933.7 L1560.9 926.5 L1560.2 919.3 L1559.8 912.0 L1559.5 904.7 L1559.5 897.4 L1559.7 890.2 L1560.1 882.9 L1560.7 875.7 L1561.5 868.4 L1562.5 861.2 L1563.7 854.0 L1565.1 846.9 L1566.7 839.8 L1568.6 832.8 L1570.6 825.8 L1572.8 818.9 L1575.3 812.0 L1577.9 805.2 L1580.7 798.5 L1583.7 791.9 L1586.9 785.4 L1590.3 778.9 L1593.9 772.6 L1597.6 766.3 L1601.5 760.2 L1605.6 754.2 L1609.9 748.3 L1614.3 742.5 L1618.9 736.9 L1623.7 731.4 L1628.6 726.0 L1633.7 720.8 L1638.9 715.7 L1644.3 710.8 L1649.8 706.1 L1655.4 701.5 L1661.1 697.0 L1667.0 692.7 L1673.0 688.6 L1679.2 684.7 L1685.4 681.0 L1691.7 677.4 L1698.2 674.0 L1704.7 670.8 L1711.3 667.8 L1718.0 665.0 Z" fill="#4a0a24" opacity=".35" filter="url(#b4)"/>
<path d="M1705.3 633.4 L1697.7 636.6 L1690.2 640.1 L1682.8 643.7 L1675.5 647.5 L1668.3 651.6 L1661.2 655.8 L1654.3 660.3 L1647.5 664.9 L1640.8 669.8 L1634.2 674.8 L1627.9 680.0 L1621.6 685.5 L1615.5 691.0 L1609.6 696.8 L1603.9 702.7 L1598.3 708.8 L1592.9 715.0 L1587.7 721.4 L1582.7 728.0 L1577.8 734.6 L1573.2 741.5 L1568.7 748.4 L1564.5 755.5 L1560.4 762.7 L1556.6 770.0 L1553.0 777.4 L1549.5 784.9 L1546.4 792.5 L1543.4 800.2 L1540.6 808.0 L1538.1 815.8 L1535.8 823.8 L1533.7 831.7 L1531.9 839.8 L1530.3 847.9 L1528.9 856.0 L1527.7 864.2 L1526.8 872.4 L1526.2 880.6 L1525.7 888.9 L1525.5 897.1 L1525.5 905.4 L1525.8 913.6 L1526.3 921.8 L1527.1 930.1 L1528.1 938.2 L1529.3 946.4 L1530.7 954.5 L1532.4 962.6 L1534.3 970.6 L1536.5 978.6 L1538.8 986.5 L1541.6 994.3 L1544.6 1001.9 L1547.9 1009.5 L1551.4 1017.0 L1555.1 1024.3 L1559.0 1031.5 L1563.1 1038.7 L1567.4 1045.6 L1571.9 1052.5 L1576.6 1059.2 L1581.4 1065.8 L1586.5 1072.2 L1591.7 1078.5 L1597.1 1084.6 L1602.7 1090.5 L1608.5 1096.3 L1614.4 1101.9 L1620.4 1107.3 L1626.6 1112.6 L1632.9 1117.7 L1639.4 1122.5 L1646.0 1127.2 L1652.7 1131.7 L1659.6 1136.0 L1666.5 1140.2 L1673.5 1144.2 L1680.6 1148.0 L1687.9 1151.6 L1695.2 1155.0 L1702.6 1158.1 L1710.1 1161.1 L1717.7 1163.8 L1725.3 1166.3 L1733.0 1168.7 L1740.8 1170.8 L1748.6 1172.7 L1756.5 1174.3 L1764.4 1175.7 L1766.8 1162.0 L1759.3 1160.4 L1751.9 1158.7 L1744.5 1156.8 L1737.2 1154.6 L1729.9 1152.3 L1722.8 1149.7 L1715.7 1146.9 L1708.7 1143.9 L1701.8 1140.7 L1695.0 1137.3 L1688.3 1133.7 L1681.7 1129.9 L1675.2 1125.9 L1668.9 1121.8 L1662.7 1117.3 L1656.7 1112.7 L1650.8 1108.0 L1645.0 1103.0 L1639.4 1097.9 L1634.0 1092.7 L1628.7 1087.3 L1623.6 1081.8 L1618.7 1076.1 L1613.9 1070.3 L1609.3 1064.3 L1604.8 1058.2 L1600.6 1052.1 L1596.5 1045.8 L1592.7 1039.4 L1589.0 1032.8 L1585.5 1026.2 L1582.2 1019.5 L1579.1 1012.8 L1576.2 1005.9 L1573.4 999.0 L1570.9 991.9 L1568.6 984.9 L1566.5 977.8 L1564.3 970.7 L1562.4 963.5 L1560.7 956.3 L1559.2 949.0 L1557.9 941.7 L1556.8 934.4 L1555.9 927.0 L1555.2 919.6 L1554.8 912.2 L1554.5 904.8 L1554.5 897.4 L1554.7 890.0 L1555.1 882.6 L1555.7 875.2 L1556.5 867.8 L1557.5 860.5 L1558.8 853.1 L1560.2 845.9 L1561.9 838.6 L1563.8 831.5 L1565.8 824.3 L1568.1 817.3 L1570.6 810.3 L1573.2 803.4 L1576.1 796.5 L1579.2 789.8 L1582.4 783.1 L1585.9 776.5 L1589.5 770.1 L1593.4 763.7 L1597.4 757.4 L1601.5 751.3 L1605.9 745.3 L1610.4 739.4 L1615.1 733.7 L1620.0 728.1 L1625.0 722.6 L1630.1 717.3 L1635.5 712.1 L1640.9 707.1 L1646.5 702.2 L1652.3 697.5 L1658.2 693.0 L1664.2 688.7 L1670.3 684.5 L1676.5 680.5 L1682.9 676.6 L1689.3 673.0 L1695.9 669.5 L1702.6 666.3 L1709.3 663.2 L1716.2 660.3 Z" fill="url(#redg)" filter="url(#b2)"/>
<path d="M1765.9 668.2 L1758.7 669.4 L1751.5 670.6 L1744.4 672.0 L1737.3 673.7 L1730.3 675.6 L1723.3 677.7 L1716.4 680.0 L1709.6 682.6 L1702.9 685.3 L1696.2 688.3 L1689.6 691.5 L1683.2 694.9 L1676.8 698.5 L1670.6 702.3 L1664.4 706.2 L1658.4 710.4 L1652.5 714.8 L1646.8 719.3 L1641.2 724.1 L1635.8 729.0 L1630.5 734.1 L1625.3 739.3 L1620.4 744.7 L1615.6 750.4 L1611.1 756.2 L1606.8 762.1 L1602.6 768.2 L1598.7 774.4 L1594.9 780.7 L1591.4 787.1 L1588.0 793.7 L1584.9 800.3 L1582.0 807.1 L1579.3 813.9 L1576.7 820.8 L1574.5 827.8 L1572.4 834.9 L1570.6 842.0 L1568.9 849.1 L1567.6 856.4 L1566.4 863.6 L1565.5 870.9 L1564.8 878.2 L1564.3 885.6 L1564.0 892.9 L1564.0 900.3 L1564.2 907.6 L1564.7 915.0 L1565.4 922.3 L1566.3 929.6 L1567.4 936.8 L1568.8 944.1 L1570.4 951.2 L1572.2 958.4 L1574.2 965.4 L1576.5 972.4 L1579.0 979.3 L1581.7 986.2 L1584.6 992.9 L1587.7 999.6 L1591.0 1006.1 L1594.5 1012.6 L1598.4 1018.9 L1602.4 1025.0 L1606.6 1031.0 L1611.0 1036.9 L1615.6 1042.6 L1620.4 1048.2 L1625.3 1053.6 L1630.4 1058.8 L1635.7 1063.9 L1641.1 1068.8 L1646.7 1073.6 L1652.4 1078.1 L1658.2 1082.5 L1664.2 1086.7 L1670.3 1090.7 L1676.5 1094.5 L1682.8 1098.1 L1689.3 1101.5 L1695.8 1104.7 L1702.4 1107.7 L1709.2 1110.4 L1715.9 1113.0 L1722.8 1115.4 L1729.7 1117.7 L1736.7 1119.7 L1743.7 1121.5 L1750.8 1123.1 L1757.9 1124.5 L1764.1 1089.0 L1758.1 1087.9 L1752.1 1086.5 L1746.2 1085.0 L1740.3 1083.3 L1734.5 1081.4 L1728.8 1079.2 L1723.1 1076.8 L1717.6 1074.3 L1712.1 1071.5 L1706.7 1068.6 L1701.5 1065.6 L1696.3 1062.3 L1691.2 1059.0 L1686.3 1055.4 L1681.4 1051.7 L1676.7 1047.9 L1672.1 1043.9 L1667.6 1039.8 L1663.3 1035.5 L1659.1 1031.1 L1655.1 1026.6 L1651.2 1021.9 L1647.4 1017.2 L1643.9 1012.3 L1640.4 1007.3 L1637.1 1002.3 L1634.0 997.1 L1631.1 991.8 L1628.2 986.5 L1625.4 981.2 L1622.9 975.7 L1620.5 970.2 L1618.3 964.6 L1616.2 958.9 L1614.4 953.1 L1612.7 947.3 L1611.2 941.5 L1609.9 935.6 L1608.8 929.7 L1607.9 923.7 L1607.1 917.7 L1606.6 911.7 L1606.2 905.7 L1606.0 899.7 L1606.0 893.6 L1606.2 887.6 L1606.6 881.6 L1607.2 875.6 L1608.0 869.6 L1608.9 863.7 L1610.1 857.7 L1611.4 851.9 L1612.9 846.0 L1614.6 840.2 L1616.5 834.5 L1618.5 828.8 L1620.7 823.2 L1623.1 817.7 L1625.7 812.2 L1628.5 806.9 L1631.4 801.6 L1634.5 796.4 L1637.7 791.3 L1641.1 786.3 L1644.7 781.5 L1648.4 776.7 L1652.2 772.0 L1656.1 767.4 L1660.1 762.9 L1664.3 758.6 L1668.6 754.3 L1673.1 750.2 L1677.7 746.3 L1682.4 742.5 L1687.2 738.8 L1692.2 735.3 L1697.2 731.9 L1702.4 728.7 L1707.7 725.7 L1713.0 722.8 L1718.5 720.1 L1724.0 717.6 L1729.7 715.2 L1735.4 713.0 L1741.1 711.0 L1747.0 709.2 L1752.9 707.6 L1758.8 706.1 L1764.8 704.8 L1770.9 703.9 Z" fill="#064a5c" opacity=".45" filter="url(#b8)"/>
<path d="M1766.8 675.2 L1759.9 676.3 L1752.9 677.5 L1746.0 678.9 L1739.2 680.5 L1732.4 682.3 L1725.6 684.3 L1718.9 686.6 L1712.3 689.0 L1705.7 691.7 L1699.3 694.6 L1692.9 697.7 L1686.6 701.0 L1680.5 704.4 L1674.4 708.1 L1668.4 712.0 L1662.6 716.0 L1656.9 720.3 L1651.3 724.7 L1645.9 729.3 L1640.6 734.0 L1635.5 739.0 L1630.5 744.1 L1625.7 749.3 L1621.1 754.8 L1616.7 760.4 L1612.5 766.1 L1608.5 772.0 L1604.7 778.1 L1601.0 784.2 L1597.6 790.4 L1594.3 796.8 L1591.3 803.2 L1588.4 809.8 L1585.8 816.4 L1583.4 823.1 L1581.2 829.9 L1579.2 836.7 L1577.4 843.6 L1575.8 850.6 L1574.4 857.6 L1573.3 864.6 L1572.4 871.7 L1571.7 878.8 L1571.3 885.9 L1571.0 893.0 L1571.0 900.2 L1571.2 907.3 L1571.7 914.4 L1572.3 921.5 L1573.2 928.6 L1574.3 935.6 L1575.6 942.6 L1577.2 949.6 L1578.9 956.5 L1580.9 963.4 L1583.1 970.2 L1585.5 976.9 L1588.1 983.5 L1590.9 990.1 L1594.0 996.5 L1597.2 1002.9 L1600.6 1009.1 L1604.3 1015.2 L1608.3 1021.2 L1612.4 1027.0 L1616.6 1032.7 L1621.1 1038.2 L1625.7 1043.6 L1630.5 1048.9 L1635.5 1054.0 L1640.6 1058.9 L1645.8 1063.7 L1651.2 1068.2 L1656.8 1072.7 L1662.4 1076.9 L1668.2 1081.0 L1674.1 1084.8 L1680.2 1088.5 L1686.3 1092.0 L1692.6 1095.3 L1698.9 1098.4 L1705.3 1101.3 L1711.8 1104.0 L1718.4 1106.5 L1725.1 1108.8 L1731.8 1111.0 L1738.5 1113.0 L1745.3 1114.7 L1752.2 1116.3 L1759.1 1117.6 L1762.9 1095.9 L1756.7 1094.7 L1750.5 1093.3 L1744.4 1091.7 L1738.3 1090.0 L1732.2 1088.0 L1726.3 1085.8 L1720.4 1083.3 L1714.7 1080.7 L1709.0 1077.8 L1703.4 1074.8 L1698.0 1071.7 L1692.6 1068.3 L1687.4 1064.8 L1682.2 1061.1 L1677.2 1057.3 L1672.3 1053.3 L1667.5 1049.2 L1662.9 1044.9 L1658.4 1040.5 L1654.1 1036.0 L1649.9 1031.3 L1645.9 1026.5 L1642.0 1021.6 L1638.2 1016.5 L1634.7 1011.4 L1631.3 1006.1 L1628.1 1000.7 L1625.0 995.3 L1622.0 989.8 L1619.1 984.2 L1616.5 978.6 L1614.0 972.8 L1611.7 967.0 L1609.6 961.1 L1607.7 955.2 L1606.0 949.2 L1604.4 943.1 L1603.1 937.0 L1601.9 930.9 L1600.9 924.7 L1600.2 918.5 L1599.6 912.3 L1599.2 906.0 L1599.0 899.8 L1599.0 893.5 L1599.2 887.3 L1599.6 881.0 L1600.2 874.8 L1601.0 868.6 L1602.0 862.4 L1603.2 856.3 L1604.6 850.2 L1606.1 844.2 L1607.9 838.2 L1609.8 832.2 L1612.0 826.3 L1614.3 820.5 L1616.8 814.8 L1619.4 809.1 L1622.3 803.6 L1625.3 798.1 L1628.5 792.7 L1631.9 787.5 L1635.4 782.3 L1639.1 777.2 L1642.9 772.3 L1646.9 767.5 L1650.9 762.7 L1655.1 758.0 L1659.5 753.5 L1663.9 749.1 L1668.6 744.9 L1673.3 740.8 L1678.2 736.9 L1683.2 733.1 L1688.3 729.4 L1693.6 726.0 L1698.9 722.6 L1704.4 719.5 L1710.0 716.5 L1715.6 713.7 L1721.4 711.1 L1727.2 708.7 L1733.1 706.4 L1739.1 704.3 L1745.1 702.4 L1751.2 700.7 L1757.4 699.2 L1763.6 697.9 L1769.9 697.0 Z" fill="url(#cyg)" filter="url(#b4)" opacity=".97"/>
</g>
<path d="M1398 277 L1404 270 L1412 262 L1417 268 L1436 266 L1444 272 L1438 280 L1452 282 L1480 281 L1506 279 L1553 268 L1572 268 L1590 276 L1625 277 L1650 276 L1668 288 L1669 300 L1682 301 L1700 306" fill="none" stroke="#f4f000" stroke-width="1.8" stroke-linejoin="round"/>
<path d="M1398 280 L1410 272 L1414 278 L1404 282 Z M1412 268 L1420 262 L1424 270" fill="none" stroke="#f4f000" stroke-width="1.8" stroke-linejoin="round"/>
<path d="M1700 184 L1650 190 L1627 195 L1590 203 L1560 214 L1548 226 L1540 242 L1553 252 L1568 254 L1590 249 L1610 242 L1627 228 L1650 224 L1670 222 L1660 237 L1650 243 L1638 257 L1700 254" fill="none" stroke="#f4f000" stroke-width="1.8" stroke-linejoin="round"/>
<path d="M1572 1182 L1576 1188 M1574 1179 L1578 1182" fill="none" stroke="#f4f000" stroke-width="1.8" stroke-linejoin="round"/>
<path d="M1548 1430 L1556 1422 L1573 1412 L1610 1405 L1640 1402 L1646 1400 L1640 1393 L1650 1389 L1668 1392 L1660 1398 L1700 1396 L1722 1392 L1740 1398 L1755 1397 L1760 1382 L1762 1372 L1770 1366 L1784 1372 L1790 1385 L1776 1394 L1760 1396" fill="none" stroke="#f4f000" stroke-width="1.8" stroke-linejoin="round"/>
<path d="M1762 1372 L1780 1362 L1803 1354 L1815 1342 L1829 1336 L1850 1328 L1872 1323 L1875 1332 L1862 1334 L1840 1347 L1822 1356 L1818 1366 L1822 1388 L1812 1412 L1800 1420 L1760 1432 L1740 1428 L1728 1418" fill="none" stroke="#f4f000" stroke-width="1.8" stroke-linejoin="round"/>
<path d="M1548 1432 L1570 1440 L1568 1452 L1590 1462 L1640 1468 L1680 1476 L1650 1484 L1600 1474 L1560 1462 L1530 1452" fill="none" stroke="#f4f000" stroke-width="1.8" stroke-linejoin="round"/>
<path d="M1812 1412 L1830 1426 L1866 1437 L1900 1434 L1940 1428 L1975 1426 L1990 1432 L1988 1448 L1975 1462 L1950 1470" fill="none" stroke="#f4f000" stroke-width="1.8" stroke-linejoin="round"/>
<path d="M1770 1458 L1800 1442 L1830 1440 L1840 1452 L1800 1456 Z" fill="none" stroke="#f4f000" stroke-width="1.8" stroke-linejoin="round"/>
<path d="M1782 1184 L1800 1180 L1838 1181 L1840 1192 L1850 1204 L1862 1216 L1868 1218 L1872 1219 L1858 1226 L1836 1225 L1822 1218 L1812 1206 L1800 1200 L1790 1192 Z" fill="none" stroke="#f4f000" stroke-width="1.8" stroke-linejoin="round"/>
<path d="M1792 1190 L1806 1196 L1816 1208 L1830 1216 L1846 1220 M1800 1186 L1812 1190 L1820 1198 M1818 1186 L1830 1192 L1836 1204 L1846 1210" fill="none" stroke="#f4f000" stroke-width="1.8" stroke-linejoin="round"/>
<path d="M1908 1186 L1918 1180 L1938 1182 L1936 1188 L1922 1190 Z M1922 1182 L1926 1188" fill="none" stroke="#f4f000" stroke-width="1.8" stroke-linejoin="round"/>
<path d="M2066 1248 L2072 1256 L2070 1262 L2066 1256 Z" fill="none" stroke="#f4f000" stroke-width="1.8" stroke-linejoin="round"/>
<path d="M1590 394 L1598 394 L1594 404 Z" fill="none" stroke="#f4f000" stroke-width="1.8" stroke-linejoin="round"/>
</g>
<rect x="1114" y="739" width="3" height="4" fill="#f4f000"/>
<rect x="1100" y="892" width="3" height="4" fill="#f4f000"/>
<rect x="1258" y="1265" width="3" height="4" fill="#f4f000"/>
<rect x="1526" y="1340" width="3" height="4" fill="#f4f000"/>
</svg>
<div class="abs" style="left:648px;top:61px;width:678px;height:125px;border:2px solid #8e8e8e;border-radius:5px;background:#000"></div>
<svg class="abs" style="left:658px;top:69px" width="30" height="30" viewBox="0 0 30 30"><defs><radialGradient id="clk" cx=".4" cy=".3" r=".8"><stop offset="0" stop-color="#f4f8ff"/><stop offset=".6" stop-color="#a9c4f2"/><stop offset="1" stop-color="#5b86d6"/></radialGradient></defs><circle cx="15" cy="15" r="14" fill="url(#clk)" stroke="#3a66c4" stroke-width="1.6"/><path d="M15 5 V16 L19 21" fill="none" stroke="#1c3f9a" stroke-width="2"/><path d="M5 15 h3 M22 15 h3" stroke="#3a66c4" stroke-width="1.4"/></svg>
<svg class="abs" style="left:703px;top:70px" width="28" height="28" viewBox="0 0 28 28"><circle cx="11" cy="11" r="8" fill="none" stroke="#6a6a6a" stroke-width="3.2"/><path d="M17 17 L23.5 23.5" stroke="#6a6a6a" stroke-width="4" stroke-linecap="round"/><path d="M7 11 h8" stroke="#6a6a6a" stroke-width="2.6"/></svg>
<svg class="abs" style="left:739px;top:70px" width="28" height="28" viewBox="0 0 28 28"><circle cx="11" cy="11" r="8" fill="none" stroke="#efefef" stroke-width="3.2"/><path d="M17 17 L23.5 23.5" stroke="#efefef" stroke-width="4" stroke-linecap="round"/><path d="M7 11 h8 M11 7 v8" stroke="#efefef" stroke-width="2.6"/></svg>
<svg class="abs" style="left:775px;top:71px" width="30" height="26" viewBox="0 0 30 26"><circle cx="12" cy="13" r="9.5" fill="none" stroke="#e4e4e4" stroke-width="2.8"/><path d="M12 6 V13 L17 17" fill="none" stroke="#e4e4e4" stroke-width="2.4"/><path d="M20 6 L28 12 L20 18 Z" fill="#000"/><path d="M21 7.5 L27 12 L21 16.5 Z" fill="#f4f4f4"/></svg>
<svg class="abs" style="left:1254px;top:69px" width="30" height="28" viewBox="0 0 30 28"><path d="M4 3 C9 1 14 3 15 8 C15.5 10 15 11 14.5 12 L27 23 C28 25 26 27 24 26 L12 14 C9 15.5 5 15 3 11 L8 12 L10 8 Z" fill="#f0f0f0"/></svg>
<svg class="abs" style="left:1294px;top:73px" width="20" height="20" viewBox="0 0 20 20"><path d="M3 3 L17 17 M17 3 L3 17" stroke="#a5a5a5" stroke-width="3.6"/></svg>
<div class="abs" style="left:694px;top:120px;width:588px;height:42px;border-radius:14px;background:#3a3a3a"></div>
<div class="abs" style="left:898px;top:98px;width:290px;text-align:center;font-size:26px;line-height:32px;color:#f2f2f2;white-space:pre;text-shadow:0 0 2px #000">2/27/2010   6:51 am</div>
<div class="abs" style="left:733px;top:133px;width:510px;height:17px;border-radius:9px;border:2px solid #e8e8e8;background:linear-gradient(#5f8cd0,#3d6bb8 60%,#4a78c2)"></div>
<div class="abs" style="left:745px;top:135px;width:4px;height:13px;background:#b7c9ea"></div>
<div class="abs" style="left:1225px;top:135px;width:16px;height:13px;border-radius:0 7px 7px 0;background:#666;border-left:3px solid #b7c9ea"></div>
<svg class="abs" style="left:708px;top:131px" width="18" height="20" viewBox="0 0 18 20"><rect x="1" y="1" width="3" height="18" fill="#fff"/><path d="M16 1 L5 10 L16 19 Z" fill="#fff"/></svg>
<svg class="abs" style="left:1251px;top:131px" width="18" height="20" viewBox="0 0 18 20"><rect x="14" y="1" width="3" height="18" fill="#fff"/><path d="M2 1 L13 10 L2 19 Z" fill="#fff"/></svg>
<svg class="abs" style="left:889px;top:122px" width="44" height="40" viewBox="0 0 44 40"><defs><linearGradient id="thm" x1="0" y1="0" x2="1" y2="0"><stop offset="0" stop-color="#ffffff"/><stop offset=".5" stop-color="#e4e4e4"/><stop offset="1" stop-color="#f8f8f8"/></linearGradient></defs><path d="M2 37 V17 L13 4 Q22 0 31 4 L42 17 V37 Z" fill="url(#thm)" stroke="#bdbdbd" stroke-width="1.2"/><path d="M14 37 V19 Q15 9 26 3" fill="none" stroke="#c4c4c4" stroke-width="1.5"/><path d="M24 17 v11 M28 17 v11 M32 17 v11" stroke="#8f8f8f" stroke-width="1.6"/></svg>
<div class="abs" style="left:702px;top:149px;font-size:25.5px;line-height:32px;color:#f2f2f2;white-space:nowrap;text-shadow:0 0 2px #000">3 am</div>
<div class="abs" style="left:1182px;top:149px;width:101px;text-align:right;font-size:25.5px;line-height:32px;color:#f2f2f2;white-space:nowrap;text-shadow:0 0 2px #000">1 pm</div>
<svg class="abs" style="left:2700px;top:55px" width="180" height="600" viewBox="0 0 180 600"><circle cx="91.5" cy="94" r="72" fill="none" stroke="#4e4e4e" stroke-width="5.5"/><circle cx="91.5" cy="94" r="49.5" fill="none" stroke="#5c5c5c" stroke-width="1.6"/><circle cx="91.5" cy="238" r="49.5" fill="none" stroke="#5c5c5c" stroke-width="1.6"/><path d="M74 345 V322 Q74 304 91.5 304 Q109 304 109 322 V345 H96.5 V441 Q101 444 101 448 Q101 452 96.5 455 V550 H109 V573 Q109 591 91.5 591 Q74 591 74 573 V550 H87 V455 Q82.5 452 82.5 448 Q82.5 444 87 441 V345 Z" fill="none" stroke="#5c5c5c" stroke-width="1.6"/><rect x="82" y="11" width="23" height="20" rx="5" fill="#fff"/></svg>
<div class="abs" style="left:2782px;top:66px;width:23px;height:20px;text-align:center;font-size:17px;line-height:20px;font-weight:bold;color:#222">N</div>
<div class="abs" style="left:692px;top:969px;width:160px;height:600px;background:#fff"></div>
<div class="abs" style="left:707px;top:1014px;width:43px;height:513px;border:2.5px solid #111;background:linear-gradient(#ff0000 0%,#ee0505 4%,#c11418 20%,#a83a3e 32%,#a87074 40%,#c4acae 46%,#ffffff 50%,#c2cccc 54%,#8aa9a9 60%,#4e9c9c 68%,#2fa7a4 78%,#12cfcd 90%,#00ffff 100%)"></div>
<div class="abs" style="left:737px;top:1065.0px;width:11px;height:2px;background:#111"></div>
<div class="abs" style="left:737px;top:1116.1px;width:11px;height:2px;background:#111"></div>
<div class="abs" style="left:737px;top:1167.2px;width:11px;height:2px;background:#111"></div>
<div class="abs" style="left:737px;top:1218.2px;width:11px;height:2px;background:#111"></div>
<div class="abs" style="left:737px;top:1269.2px;width:11px;height:2px;background:#111"></div>
<div class="abs" style="left:737px;top:1320.3px;width:11px;height:2px;background:#111"></div>
<div class="abs" style="left:737px;top:1371.3px;width:11px;height:2px;background:#111"></div>
<div class="abs" style="left:737px;top:1422.4px;width:11px;height:2px;background:#111"></div>
<div class="abs" style="left:737px;top:1473.5px;width:11px;height:2px;background:#111"></div>
<div class="abs" style="left:760px;top:1000.0px;font-family:'DejaVu Sans',sans-serif;font-size:21px;line-height:28px;color:#1a1a1a;white-space:nowrap">0.20</div>
<div class="abs" style="left:760px;top:1050.8px;font-family:'DejaVu Sans',sans-serif;font-size:21px;line-height:28px;color:#1a1a1a;white-space:nowrap">0.16</div>
<div class="abs" style="left:760px;top:1101.6px;font-family:'DejaVu Sans',sans-serif;font-size:21px;line-height:28px;color:#1a1a1a;white-space:nowrap">0.12</div>
<div class="abs" style="left:760px;top:1152.4px;font-family:'DejaVu Sans',sans-serif;font-size:21px;line-height:28px;color:#1a1a1a;white-space:nowrap">0.08</div>
<div class="abs" style="left:760px;top:1203.2px;font-family:'DejaVu Sans',sans-serif;font-size:21px;line-height:28px;color:#1a1a1a;white-space:nowrap">0.04</div>
<div class="abs" style="left:760px;top:1254.0px;font-family:'DejaVu Sans',sans-serif;font-size:21px;line-height:28px;color:#1a1a1a;white-space:nowrap">0.00</div>
<div class="abs" style="left:760px;top:1304.8px;font-family:'DejaVu Sans',sans-serif;font-size:21px;line-height:28px;color:#1a1a1a;white-space:nowrap">−0.04</div>
<div class="abs" style="left:760px;top:1355.6px;font-family:'DejaVu Sans',sans-serif;font-size:21px;line-height:28px;color:#1a1a1a;white-space:nowrap">−0.08</div>
<div class="abs" style="left:760px;top:1406.4px;font-family:'DejaVu Sans',sans-serif;font-size:21px;line-height:28px;color:#1a1a1a;white-space:nowrap">−0.12</div>
<div class="abs" style="left:760px;top:1457.2px;font-family:'DejaVu Sans',sans-serif;font-size:21px;line-height:28px;color:#1a1a1a;white-space:nowrap">−0.16</div>
<div class="abs" style="left:760px;top:1508.0px;font-family:'DejaVu Sans',sans-serif;font-size:21px;line-height:28px;color:#1a1a1a;white-space:nowrap">−0.20</div>
<div class="abs" style="left:1652px;top:1395px;font-size:29.6px;line-height:36px;font-weight:bold;color:#e9e9e9;white-space:nowrap;letter-spacing:.25px;text-shadow:0 0 3px #000,0 0 3px #000,1px 1px 2px #000,-1px -1px 2px #000">Image Landsat</div>
<div class="abs" style="left:1475px;top:1497px;font-size:28.7px;line-height:36px;font-weight:bold;color:#e6e6e6;white-space:nowrap;text-shadow:0 0 3px #000,0 0 3px #000,1px 1px 2px #000,-1px -1px 2px #000">Data SIO, NOAA, U.S. Navy, NGA, GEBCO</div>
<div class="abs" style="left:2675px;top:1457px;width:199px;height:106px;background:#24448c;border:4px solid #9a9a9a;overflow:hidden"><div class="abs" style="left:0;top:0;width:191px;height:9px;background:linear-gradient(#233c74,#2f4f92)"></div><div class="abs" style="left:0;top:85px;width:191px;height:13px;background:#c4c9dc"></div><svg class="abs" style="left:0;top:0;filter:blur(1.2px)" width="191" height="98" viewBox="0 0 191 98"><path d="M8 16 L30 12 L52 15 L60 20 L48 24 L40 30 L32 36 L26 28 L12 24 Z" fill="#4a7458" opacity=".7"/><path d="M40 46 L52 44 L58 54 L50 72 L45 60 Z" fill="#3f6a50" opacity=".6"/><path d="M90 18 L118 12 L168 12 L184 20 L170 28 L150 34 L134 28 L112 30 L98 28 Z" fill="#55805a" opacity=".7"/><path d="M94 34 L112 35 L118 46 L108 64 L100 50 Z" fill="#c9a25e" opacity=".9"/><path d="M154 58 L170 57 L173 67 L158 68 Z" fill="#c79558" opacity=".9"/><path d="M104 7 L126 3 L116 10 Z" fill="#fff"/><ellipse cx="110" cy="40" rx="11" ry="4" fill="#dcb068" opacity=".9"/></svg></div>
<div class="abs" style="left:2680px;top:1485px;width:191px;height:73px;border:2px solid #ee1111"></div>
<div class="abs" style="left:2504px;top:1455px;font-family:'Liberation Serif',serif;font-size:71px;line-height:84px;color:#ececec;white-space:nowrap;letter-spacing:0.6px;text-shadow:1px 2px 3px rgba(0,0,0,.6)">Google</div>
<div class="abs" style="left:2729px;top:1460px;font-family:'DejaVu Sans Light','DejaVu Sans',sans-serif;font-weight:200;font-size:58px;line-height:84px;color:#f4f4f4;white-space:nowrap;transform:scaleX(.855);transform-origin:0 0;text-shadow:1px 2px 3px rgba(0,0,0,.6)">earth</div>
<div class="abs" style="left:2587px;top:1575px;font-size:23.5px;letter-spacing:1px;line-height:32px;font-weight:bold;color:#f2f2f2;white-space:nowrap;text-shadow:0 0 3px #000,0 0 3px #000,1px 1px 2px #000,-1px -1px 2px #000">eye alt 8274.89 mi</div>
<div class="abs" style="left:2825px;top:1577px;width:31px;height:31px;border-radius:16px;border:5.5px solid #5b8cb8"></div>
<div class="abs" style="left:1694px;top:117px;width:1040px;height:1062px;background:#fff"></div>
<svg class="abs" style="left:1640px;top:595px" width="60" height="110" viewBox="0 0 60 110"><path d="M55 5 L6 54 L55 103 Z" fill="#fff"/></svg>
<svg class="abs" style="left:2698px;top:130px" width="26" height="24" viewBox="0 0 26 24"><path d="M3 2 L23 22 M23 2 L3 22" stroke="#3a3a3a" stroke-width="3.4"/></svg>
<div class="abs" style="left:1694px;top:185px;width:1040px;text-align:center;font-size:31.5px;line-height:40px;font-weight:bold;color:#111">Gauge 32412</div>
<div class="abs" style="left:1724px;top:249px;font-family:'Liberation Mono',monospace;font-weight:bold;font-size:26.6px;line-height:30px;color:#1a1a1a;white-space:pre">Time     : t1 = 0, t2 = 1e+10
Location : x1 = -86.392, y1 = -17.975</div>
<div class="abs" style="left:1724px;top:1112px;font-family:'Liberation Mono',monospace;font-weight:bold;font-size:26.6px;line-height:30px;color:#1a1a1a;white-space:pre">File : gauge32412fig300.png</div>
<svg class="abs" style="left:1694px;top:117px;font-family:'DejaVu Sans',sans-serif" width="1040" height="1062" viewBox="1694 117 1040 1062">
<defs><clipPath id="axclip"><rect x="1850" y="410" width="775" height="600"/></clipPath></defs>
<g clip-path="url(#axclip)"><polyline points="1850.0,710.0 1891.6,710.0 1933.2,710.1 1974.9,710.2 2016.5,710.3 2058.1,710.2 2099.7,710.0 2101.2,710.1 2102.6,710.3 2104.0,710.4 2105.5,710.2 2106.9,709.4 2108.3,708.0 2109.5,706.5 2110.6,704.7 2111.8,702.4 2112.9,699.4 2114.1,695.3 2115.2,690.0 2116.2,684.0 2117.2,676.8 2118.2,668.5 2119.2,659.5 2120.2,649.9 2121.2,640.0 2122.3,629.2 2123.3,617.4 2124.3,604.9 2125.3,592.5 2126.3,580.7 2127.3,570.0 2128.1,561.8 2129.0,554.2 2129.9,547.2 2130.7,540.8 2131.6,535.1 2132.4,530.0 2133.2,526.4 2133.9,523.6 2134.6,521.4 2135.3,519.7 2136.0,518.6 2136.8,518.0 2137.5,517.8 2138.2,518.0 2138.9,518.7 2139.6,520.1 2140.3,522.2 2141.1,525.0 2142.1,529.9 2143.1,535.5 2144.1,541.9 2145.1,548.9 2146.1,556.6 2147.1,565.0 2148.1,574.3 2149.1,584.6 2150.1,595.6 2151.1,607.0 2152.1,618.6 2153.1,630.0 2154.3,643.3 2155.4,657.0 2156.6,670.9 2157.7,684.6 2158.9,697.8 2160.0,710.0 2161.1,721.4 2162.3,732.4 2163.4,742.8 2164.6,752.6 2165.7,761.7 2166.9,770.0 2168.0,777.5 2169.2,784.1 2170.3,790.1 2171.5,795.5 2172.6,800.4 2173.8,805.0 2174.6,808.0 2175.5,810.5 2176.4,812.5 2177.2,814.2 2178.1,815.6 2178.9,817.0 2179.7,818.0 2180.4,818.9 2181.1,819.5 2181.8,819.9 2182.5,820.0 2183.2,820.0 2184.1,819.8 2185.0,819.6 2185.8,819.1 2186.7,818.3 2187.6,816.9 2188.4,815.0 2189.4,811.9 2190.4,808.2 2191.4,804.0 2192.4,799.4 2193.4,794.7 2194.4,790.0 2195.6,784.4 2196.7,778.4 2197.9,772.2 2199.0,766.1 2200.2,760.3 2201.3,755.0 2202.5,750.1 2203.6,745.4 2204.8,740.9 2205.9,736.8 2207.1,733.2 2208.2,730.0 2209.5,727.0 2210.8,724.6 2212.1,722.5 2213.4,720.8 2214.7,719.3 2216.0,718.0 2217.0,717.1 2218.0,716.4 2219.0,716.0 2220.0,715.8 2221.0,715.8 2222.0,716.0 2223.1,716.5 2224.3,717.4 2225.4,718.5 2226.6,719.6 2227.7,720.9 2228.9,722.0 2230.0,723.2 2231.2,724.5 2232.3,725.8 2233.5,727.0 2234.6,728.1 2235.8,729.0 2236.5,729.4 2237.2,729.7 2237.9,729.9 2238.6,729.9 2239.4,729.6 2240.1,729.0 2241.1,727.9 2242.1,726.5 2243.1,725.0 2244.1,723.1 2245.1,720.8 2246.1,718.0 2247.3,714.2 2248.4,709.8 2249.6,705.0 2250.7,700.0 2251.9,694.9 2253.0,690.0 2254.1,685.0 2255.3,679.7 2256.4,674.4 2257.6,669.2 2258.7,664.3 2259.9,660.0 2261.0,656.2 2262.2,652.7 2263.3,649.6 2264.5,646.8 2265.6,644.2 2266.8,642.0 2267.6,640.6 2268.5,639.6 2269.4,638.8 2270.2,638.3 2271.1,638.1 2271.9,638.0 2272.8,638.1 2273.7,638.3 2274.5,638.7 2275.4,639.4 2276.2,640.5 2277.1,642.0 2278.3,644.5 2279.4,647.4 2280.6,650.6 2281.7,654.1 2282.9,657.9 2284.0,662.0 2285.1,666.4 2286.3,671.1 2287.4,676.2 2288.6,681.4 2289.7,686.7 2290.9,692.0 2292.0,697.4 2293.2,703.1 2294.3,708.9 2295.5,714.6 2296.6,720.0 2297.8,725.0 2298.9,729.6 2300.1,733.9 2301.2,737.9 2302.4,741.7 2303.5,745.0 2304.7,748.0 2305.8,750.5 2307.0,752.6 2308.1,754.3 2309.3,755.8 2310.4,757.0 2311.6,758.0 2312.4,758.6 2313.3,758.8 2314.1,758.9 2315.0,758.7 2315.9,758.4 2316.7,758.0 2317.9,757.3 2319.0,756.4 2320.2,755.3 2321.3,754.2 2322.5,753.1 2323.6,752.0 2325.0,750.6 2326.5,749.1 2327.9,747.6 2329.4,746.2 2330.8,744.9 2332.2,744.0 2333.7,743.5 2335.1,743.2 2336.5,743.2 2338.0,743.3 2339.4,743.2 2340.8,743.0 2341.8,742.6 2342.8,742.0 2343.8,741.3 2344.9,740.7 2345.9,740.2 2346.9,740.0 2348.0,740.2 2349.2,740.6 2350.3,741.1 2351.5,741.8 2352.6,742.5 2353.8,743.0 2355.0,743.6 2356.3,744.2 2357.6,744.9 2358.9,745.5 2360.2,745.9 2361.5,746.0 2362.4,746.0 2363.2,745.8 2364.1,745.5 2364.9,744.9 2365.8,744.1 2366.7,743.0 2367.8,741.1 2369.0,738.8 2370.1,736.3 2371.3,733.6 2372.4,730.8 2373.6,728.0 2374.8,724.7 2376.1,721.2 2377.4,717.6 2378.7,713.9 2380.0,710.4 2381.3,707.0 2382.6,703.7 2383.9,700.5 2385.2,697.3 2386.5,694.3 2387.8,691.5 2389.1,689.0 2390.2,687.0 2391.4,685.2 2392.5,683.6 2393.6,682.2 2394.8,681.0 2395.9,680.0 2396.8,679.5 2397.7,679.2 2398.5,679.1 2399.4,679.2 2400.2,679.5 2401.1,680.0 2402.3,680.9 2403.4,682.0 2404.6,683.2 2405.7,684.7 2406.9,686.3 2408.0,688.0 2409.4,690.4 2410.9,693.1 2412.3,695.9 2413.7,698.8 2415.2,701.5 2416.6,704.0 2418.3,706.8 2420.1,709.5 2421.8,712.1 2423.5,714.6 2425.2,716.9 2426.9,719.0 2428.4,720.6 2429.8,721.9 2431.2,723.1 2432.7,724.1 2434.1,725.1 2435.6,726.0 2436.6,726.6 2437.6,727.1 2438.6,727.6 2439.6,727.9 2440.6,728.0 2441.6,728.0 2443.2,727.6 2444.7,727.0 2446.3,726.2 2447.9,725.4 2449.5,724.6 2451.1,724.0 2452.8,723.5 2454.5,723.1 2456.2,722.8 2457.9,722.5 2459.7,722.3 2461.4,722.0 2462.8,721.8 2464.3,721.7 2465.7,721.6 2467.1,721.5 2468.6,721.3 2470.0,721.0 2471.7,720.4 2473.4,719.7 2475.2,718.9 2476.9,718.1 2478.6,717.4 2480.3,717.0 2482.2,716.9 2484.1,717.0 2485.9,717.3 2487.8,717.5 2489.7,717.7 2491.5,717.5 2493.4,717.1 2495.3,716.4 2497.1,715.6 2499.0,714.8 2500.9,713.9 2502.7,713.0 2504.7,712.0 2506.7,711.0 2508.8,710.0 2510.8,708.9 2512.8,707.9 2514.8,707.0 2516.6,706.2 2518.5,705.5 2520.4,704.8 2522.2,704.1 2524.1,703.5 2526.0,703.0 2527.3,702.7 2528.6,702.4 2529.8,702.2 2531.1,702.1 2532.4,702.0 2533.7,702.0 2535.3,702.0 2536.9,702.1 2538.5,702.2 2540.0,702.4 2541.6,702.7 2543.2,703.0 2545.3,703.5 2547.5,704.1 2549.7,704.8 2551.8,705.5 2554.0,706.2 2556.1,707.0 2558.3,707.8 2560.4,708.6 2562.6,709.4 2564.7,710.3 2566.9,711.2 2569.0,712.0 2571.2,712.9 2573.3,713.8 2575.5,714.7 2577.6,715.5 2579.8,716.3 2581.9,717.0 2584.1,717.6 2586.2,718.1 2588.4,718.6 2590.6,718.9 2592.7,719.2 2594.9,719.5 2598.3,719.8 2601.8,720.0 2605.2,720.1 2608.6,720.3 2612.1,720.4 2615.5,720.5" fill="none" stroke="#2828ff" stroke-width="1.8" stroke-linejoin="round"/>
<polyline points="1850.0,710.1 1851.1,709.8 1852.2,708.7 1853.2,710.1 1854.3,710.0 1855.4,709.7 1856.5,710.9 1857.5,710.0 1858.6,709.6 1859.7,709.1 1860.8,726.2 1861.8,717.9 1862.1,710.0 1863.3,680.0 1864.2,210.0 1865.1,830.0 1865.5,450.0 1865.9,945.0 1866.4,660.0 1866.8,860.0 1867.2,670.0 1867.7,800.0 1868.1,665.0 1868.9,790.0 1869.8,670.0 1870.5,701.4 1871.5,734.5 1872.6,743.3 1873.7,708.1 1874.8,738.0 1875.8,729.0 1876.9,725.3 1878.0,736.8 1879.1,712.0 1880.1,713.2 1881.2,692.4 1882.3,709.1 1883.4,703.3 1884.4,710.0 1885.5,702.7 1886.6,711.9 1887.7,719.4 1888.8,689.7 1889.8,690.3 1890.9,696.9 1892.0,702.2 1893.1,715.9 1894.1,718.5 1895.2,716.5 1896.3,723.0 1897.4,702.1 1898.4,712.9 1899.5,700.1 1900.6,713.2 1901.7,697.3 1902.7,700.6 1903.8,723.3 1904.9,717.6 1906.0,699.4 1907.0,710.8 1908.1,698.0 1909.2,712.5 1910.3,720.3 1911.4,706.9 1912.4,703.5 1913.5,715.3 1914.6,719.3 1915.7,713.7 1916.7,699.9 1917.8,704.5 1918.9,718.1 1920.0,715.3 1921.0,718.2 1922.1,718.9 1923.2,704.1 1924.3,716.3 1925.3,708.9 1926.4,711.0 1927.5,715.8 1928.6,705.7 1929.7,716.7 1930.7,707.4 1931.8,716.8 1932.9,711.4 1934.0,715.0 1935.0,713.9 1936.1,706.2 1937.2,707.6 1938.3,711.6 1939.3,706.9 1940.4,712.3 1941.5,710.8 1942.6,707.2 1943.6,708.9 1944.7,713.2 1945.8,706.1 1946.9,712.3 1948.0,711.9 1949.0,707.8 1950.1,711.4 1951.2,711.6 1952.3,713.4 1953.3,713.3 1954.4,709.3 1955.5,712.1 1956.6,709.2 1957.6,711.0 1958.7,710.4 1959.8,706.3 1960.9,710.1 1961.9,709.4 1963.0,707.1 1964.1,712.5 1965.2,712.8 1966.2,706.7 1967.3,707.5 1968.4,712.0 1969.5,712.5 1970.6,708.1 1971.6,706.5 1972.7,712.4 1973.8,706.4 1974.9,706.9 1975.9,709.2 1977.0,710.6 1978.1,713.2 1979.2,713.7 1980.2,706.3 1981.3,712.1 1982.4,708.4 1983.5,711.9 1984.5,707.4 1985.6,709.2 1986.7,711.7 1987.8,712.6 1988.9,708.2 1989.9,713.4 1991.0,712.2 1992.1,709.5 1993.2,707.2 1994.2,709.1 1995.3,711.8 1996.4,706.7 1997.5,712.4 1998.5,713.9 1999.6,711.8 2000.7,710.4 2001.8,713.5 2002.8,712.6 2003.9,711.0 2005.0,709.4 2006.1,712.9 2007.2,711.1 2008.2,706.9 2009.3,706.2 2010.4,708.7 2011.5,708.5 2012.5,709.3 2013.6,712.9 2014.7,713.7 2015.8,713.9 2016.8,706.7 2017.9,708.4 2019.0,706.3 2020.1,713.8 2021.1,708.9 2022.2,710.1 2023.3,708.8 2024.4,710.9 2025.5,707.5 2026.5,712.1 2027.6,709.8 2028.7,708.8 2029.8,708.0 2030.8,708.8 2031.9,709.0 2033.0,708.5 2034.1,707.9 2035.1,710.7 2036.2,709.1 2037.3,708.0 2038.4,708.1 2039.4,710.4 2040.5,708.5 2041.6,708.2 2042.7,709.6 2043.8,709.4 2044.8,710.6 2045.9,709.6 2047.0,709.5 2048.1,712.1 2049.1,709.3 2050.2,707.5 2051.3,708.1 2052.4,708.9 2053.4,710.6 2054.5,708.8 2055.6,709.6 2056.7,710.3 2057.7,708.3 2058.8,712.1 2059.9,708.7 2061.0,712.4 2062.0,709.5 2063.1,710.1 2064.2,711.3 2065.3,709.0 2066.4,710.0 2067.4,709.4 2068.5,707.9 2069.6,711.2 2070.7,712.4 2071.7,711.0 2072.8,709.1 2073.9,711.5 2075.0,711.7 2076.0,708.0 2077.1,709.2 2078.2,710.3 2079.3,708.0 2080.3,710.9 2081.4,709.2 2082.5,711.5 2083.6,710.3 2084.7,708.5 2085.7,707.9 2086.8,708.1 2087.9,710.6 2089.0,709.6 2090.0,710.9 2091.1,711.8 2092.2,710.0 2093.3,708.3 2094.3,708.3 2095.4,708.9 2096.5,707.7 2097.6,711.1 2098.6,711.7 2099.7,710.2 2100.8,711.1 2101.9,711.4 2103.0,710.4 2104.0,709.4 2105.1,710.0 2106.2,710.9 2107.3,708.3 2108.3,707.6 2109.4,710.2 2110.5,712.1 2111.6,712.3 2112.6,708.1 2113.7,712.3 2114.8,709.0 2115.9,709.6 2116.9,712.3 2118.0,706.5 2119.1,705.8 2120.2,679.4 2121.2,650.5 2122.3,630.7 2123.4,596.0 2124.5,578.2 2125.6,554.3 2126.6,530.4 2127.7,502.6 2128.8,490.2 2129.9,473.4 2130.9,487.7 2132.0,500.5 2133.1,498.9 2134.2,492.8 2135.2,525.7 2136.3,549.5 2137.4,580.7 2138.5,610.9 2139.5,633.5 2140.6,650.8 2141.7,665.5 2142.8,672.7 2143.9,661.4 2144.9,646.8 2146.0,649.8 2147.1,657.0 2148.2,661.3 2149.2,662.5 2150.3,654.6 2151.4,650.1 2152.5,647.5 2153.5,624.8 2154.6,624.2 2155.7,634.4 2156.8,633.7 2157.8,634.3 2158.9,633.0 2160.0,641.5 2161.1,660.0 2162.2,677.1 2163.2,684.9 2164.3,680.7 2165.4,683.9 2166.5,679.2 2167.5,698.5 2168.6,717.3 2169.7,714.1 2170.8,714.1 2171.8,711.1 2172.9,715.1 2174.0,706.5 2175.1,711.7 2176.1,718.0 2177.2,729.6 2178.3,735.9 2179.4,750.9 2180.5,753.2 2181.5,765.7 2182.6,784.3 2183.7,800.0 2184.8,795.1 2185.8,784.4 2186.9,772.4 2188.0,776.0 2189.1,796.1 2190.1,801.3 2191.2,801.5 2192.3,783.9 2193.4,782.7 2194.4,772.0 2195.5,747.8 2196.6,736.8 2197.7,718.0 2198.8,722.3 2199.8,735.4 2200.9,749.7 2202.0,750.2 2203.1,734.7 2204.1,727.6 2205.2,719.6 2206.3,742.5 2207.4,753.3 2208.4,762.2 2209.5,775.0 2210.6,776.0 2211.7,783.3 2212.7,791.0 2213.8,784.4 2214.9,771.5 2216.0,758.3 2217.0,741.2 2218.1,732.1 2219.2,747.1 2220.3,771.0 2221.4,773.8 2222.4,762.4 2223.5,757.7 2224.6,747.1 2225.7,747.0 2226.7,760.2 2227.8,777.8 2228.9,793.7 2230.0,788.2 2231.0,764.4 2232.1,757.3 2233.2,746.2 2234.3,740.1 2235.3,741.7 2236.4,741.4 2237.5,737.7 2238.6,737.7 2239.7,724.5 2240.7,718.5 2241.8,704.5 2242.9,694.9 2244.0,692.8 2245.0,680.3 2246.1,674.5 2247.2,673.9 2248.3,672.5 2249.3,674.6 2250.4,665.7 2251.5,649.4 2252.6,632.7 2253.6,645.8 2254.7,660.3 2255.8,686.7 2256.9,690.1 2258.0,710.5 2259.0,719.7 2260.1,726.7 2261.2,713.4 2262.3,709.9 2263.3,701.7 2264.4,699.8 2265.5,707.2 2266.6,701.0 2267.6,709.5 2268.7,699.9 2269.8,698.0 2270.9,693.6 2271.9,684.6 2273.0,689.5 2274.1,694.0 2275.2,697.3 2276.2,699.6 2277.3,696.6 2278.4,688.5 2279.5,675.9 2280.6,668.3 2281.6,666.1 2282.7,658.7 2283.8,658.0 2284.9,651.6 2285.9,658.5 2287.0,664.0 2288.1,674.7 2289.2,685.2 2290.2,688.5 2291.3,684.7 2292.4,673.7 2293.5,678.4 2294.5,680.3 2295.6,692.8 2296.7,713.1 2297.8,723.1 2298.9,727.3 2299.9,742.9 2301.0,754.8 2302.1,756.0 2303.2,765.1 2304.2,764.9 2305.3,777.0 2306.4,777.8 2307.5,775.3 2308.5,770.8 2309.6,756.1 2310.7,737.8 2311.8,723.3 2312.8,713.9 2313.9,715.4 2315.0,701.9 2316.1,692.9 2317.2,701.0 2318.2,703.8 2319.3,714.7 2320.4,721.1 2321.5,725.4 2322.5,730.9 2323.6,729.4 2324.7,724.6 2325.8,718.8 2326.8,718.6 2327.9,713.0 2329.0,710.0 2330.1,709.7 2331.1,715.2 2332.2,723.2 2333.3,740.5 2334.4,746.5 2335.5,739.0 2336.5,748.0 2337.6,747.4 2338.7,755.8 2339.8,753.5 2340.8,749.8 2341.9,747.7 2343.0,742.5 2344.1,746.5 2345.1,733.4 2346.2,726.5 2347.3,729.2 2348.4,720.8 2349.4,712.1 2350.5,721.3 2351.6,729.1 2352.7,734.6 2353.8,735.7 2354.8,745.0 2355.9,730.3 2357.0,727.2 2358.1,724.2 2359.1,718.2 2360.2,715.9 2361.3,712.4 2362.4,703.8 2363.4,698.7 2364.5,685.4 2365.6,677.9 2366.7,674.9 2367.7,674.1 2368.8,683.1 2369.9,689.7 2371.0,696.2 2372.0,698.6 2373.1,690.2 2374.2,687.9 2375.3,687.7 2376.4,692.0 2377.4,697.2 2378.5,706.8 2379.6,708.2 2380.7,720.6 2381.7,719.4 2382.8,720.0 2383.9,727.5 2385.0,725.5 2386.0,720.4 2387.1,713.3 2388.2,710.7 2389.3,694.9 2390.3,690.9 2391.4,690.1 2392.5,683.2 2393.6,681.3 2394.7,678.7 2395.7,677.4 2396.8,667.0 2397.9,676.1 2399.0,680.2 2400.0,684.3 2401.1,686.5 2402.2,702.8 2403.3,700.3 2404.3,703.0 2405.4,712.9 2406.5,715.3 2407.6,723.7 2408.6,724.7 2409.7,724.3 2410.8,729.5 2411.9,729.4 2413.0,723.3 2414.0,729.4 2415.1,734.2 2416.2,732.9 2417.3,741.9 2418.3,741.1 2419.4,741.8 2420.5,736.2 2421.6,741.5 2422.6,731.7 2423.7,726.3 2424.8,731.7 2425.9,718.0 2426.9,724.1 2428.0,717.2 2429.1,720.2 2430.2,719.4 2431.2,721.2 2432.3,730.9 2433.4,723.4 2434.5,732.0 2435.6,732.5 2436.6,733.5 2437.7,738.0 2438.8,740.8 2439.9,738.1 2440.9,737.5 2442.0,739.0 2443.1,732.0 2444.2,735.3 2445.2,736.9 2446.3,734.3 2447.4,739.9 2448.5,741.6 2449.5,737.6 2450.6,745.1 2451.7,739.0 2452.8,738.7 2453.9,745.0 2454.9,731.6 2456.0,730.1 2457.1,742.3 2458.2,735.0 2459.2,743.4 2460.3,745.6 2461.4,742.3 2462.5,745.2 2463.5,736.1 2464.6,725.3 2465.7,722.0 2466.8,719.5 2467.8,709.3 2468.9,707.0 2470.0,705.4 2471.1,707.1 2472.2,695.7 2473.2,690.7 2474.3,686.8 2475.4,681.6 2476.5,674.5 2477.5,686.3 2478.6,689.5 2479.7,693.8 2480.8,702.6 2481.8,710.1 2482.9,711.5 2484.0,718.7 2485.1,719.6 2486.1,720.9 2487.2,709.0 2488.3,703.3 2489.4,699.7 2490.5,707.6 2491.5,716.6 2492.6,714.8 2493.7,723.6 2494.8,725.4 2495.8,723.4 2496.9,719.2 2498.0,709.0 2499.1,705.3 2500.1,701.1 2501.2,697.0 2502.3,692.0 2503.4,695.3 2504.4,691.0 2505.5,682.5 2506.6,683.5 2507.7,684.2 2508.8,694.5 2509.8,694.5 2510.9,692.2 2512.0,690.6 2513.1,688.5 2514.1,695.3 2515.2,690.5 2516.3,696.6 2517.4,697.0 2518.4,690.4 2519.5,692.4 2520.6,691.9 2521.7,695.5 2522.7,694.8 2523.8,698.5 2524.9,697.4 2526.0,693.1 2527.0,692.4 2528.1,702.1 2529.2,702.1 2530.3,694.3 2531.4,693.7 2532.4,689.1 2533.5,692.9 2534.6,687.5 2535.7,686.6 2536.7,678.9 2537.8,685.8 2538.9,683.9 2540.0,681.4 2541.0,691.0 2542.1,689.9 2543.2,689.0 2544.3,685.5 2545.3,690.0 2546.4,689.3 2547.5,691.1 2548.6,680.4 2549.7,689.9 2550.7,692.1 2551.8,688.5 2552.9,691.6 2554.0,691.4 2555.0,698.2 2556.1,694.7 2557.2,701.8 2558.3,698.9 2559.3,692.3 2560.4,698.0 2561.5,694.1 2562.6,687.8 2563.6,686.4 2564.7,689.3 2565.8,688.9 2566.9,684.2 2568.0,677.7 2569.0,683.6 2570.1,689.1 2571.2,684.5 2572.3,688.7 2573.3,687.0 2574.4,693.7 2575.5,701.0 2576.6,713.7 2577.6,716.4 2578.7,722.7 2579.8,722.9 2580.9,722.3 2581.9,716.2 2583.0,717.0 2584.1,726.1 2585.2,727.6 2586.2,730.4 2587.3,733.2 2588.4,735.6 2589.5,738.5 2590.6,743.7 2591.6,740.3 2592.7,738.5 2593.8,742.6 2594.9,740.1 2595.9,744.0 2597.0,747.6 2598.1,739.6 2599.2,737.1 2600.2,743.2 2601.3,747.0 2602.4,744.2 2603.5,747.0 2604.5,749.8 2605.6,748.2 2606.7,752.8 2607.8,750.3 2608.9,758.6 2609.9,752.2 2611.0,748.7 2612.1,758.3 2613.2,760.0 2614.2,753.8 2615.3,753.5 2616.4,765.0 2617.5,760.1 2618.5,767.8 2619.6,762.3 2620.7,765.2 2621.8,764.3 2622.8,758.9 2623.9,746.6 2625.0,743.7" fill="none" stroke="#ff1414" stroke-width="1.8" stroke-linejoin="round"/>
<path d="M1850 710.0 H2625" stroke="#111" stroke-width="2"/></g>
<rect x="1850" y="410" width="775" height="600" fill="none" stroke="#555" stroke-width="2.2"/>
<text x="1850.0" y="1034.5" text-anchor="middle" font-size="19.8" fill="#1a1a1a" style="font-family:'DejaVu Sans',sans-serif">0</text>
<path d="M1936.1 1010 v-8 M1936.1 410 v8" stroke="#333" stroke-width="1.6"/>
<text x="1936.1" y="1034.5" text-anchor="middle" font-size="19.8" fill="#1a1a1a" style="font-family:'DejaVu Sans',sans-serif">1</text>
<path d="M2022.2 1010 v-8 M2022.2 410 v8" stroke="#333" stroke-width="1.6"/>
<text x="2022.2" y="1034.5" text-anchor="middle" font-size="19.8" fill="#1a1a1a" style="font-family:'DejaVu Sans',sans-serif">2</text>
<path d="M2108.3 1010 v-8 M2108.3 410 v8" stroke="#333" stroke-width="1.6"/>
<text x="2108.3" y="1034.5" text-anchor="middle" font-size="19.8" fill="#1a1a1a" style="font-family:'DejaVu Sans',sans-serif">3</text>
<path d="M2194.4 1010 v-8 M2194.4 410 v8" stroke="#333" stroke-width="1.6"/>
<text x="2194.4" y="1034.5" text-anchor="middle" font-size="19.8" fill="#1a1a1a" style="font-family:'DejaVu Sans',sans-serif">4</text>
<path d="M2280.6 1010 v-8 M2280.6 410 v8" stroke="#333" stroke-width="1.6"/>
<text x="2280.6" y="1034.5" text-anchor="middle" font-size="19.8" fill="#1a1a1a" style="font-family:'DejaVu Sans',sans-serif">5</text>
<path d="M2366.7 1010 v-8 M2366.7 410 v8" stroke="#333" stroke-width="1.6"/>
<text x="2366.7" y="1034.5" text-anchor="middle" font-size="19.8" fill="#1a1a1a" style="font-family:'DejaVu Sans',sans-serif">6</text>
<path d="M2452.8 1010 v-8 M2452.8 410 v8" stroke="#333" stroke-width="1.6"/>
<text x="2452.8" y="1034.5" text-anchor="middle" font-size="19.8" fill="#1a1a1a" style="font-family:'DejaVu Sans',sans-serif">7</text>
<path d="M2538.9 1010 v-8 M2538.9 410 v8" stroke="#333" stroke-width="1.6"/>
<text x="2538.9" y="1034.5" text-anchor="middle" font-size="19.8" fill="#1a1a1a" style="font-family:'DejaVu Sans',sans-serif">8</text>
<text x="2625.0" y="1034.5" text-anchor="middle" font-size="19.8" fill="#1a1a1a" style="font-family:'DejaVu Sans',sans-serif">9</text>
<text x="1842" y="417.5" text-anchor="end" font-size="19.8" fill="#1a1a1a" style="font-family:'DejaVu Sans',sans-serif">0.3</text>
<path d="M1850 510 h8 M2625 510 h-8" stroke="#333" stroke-width="1.6"/>
<text x="1842" y="517.5" text-anchor="end" font-size="19.8" fill="#1a1a1a" style="font-family:'DejaVu Sans',sans-serif">0.2</text>
<path d="M1850 610 h8 M2625 610 h-8" stroke="#333" stroke-width="1.6"/>
<text x="1842" y="617.5" text-anchor="end" font-size="19.8" fill="#1a1a1a" style="font-family:'DejaVu Sans',sans-serif">0.1</text>
<path d="M1850 710 h8 M2625 710 h-8" stroke="#333" stroke-width="1.6"/>
<text x="1842" y="717.5" text-anchor="end" font-size="19.8" fill="#1a1a1a" style="font-family:'DejaVu Sans',sans-serif">0.0</text>
<path d="M1850 810 h8 M2625 810 h-8" stroke="#333" stroke-width="1.6"/>
<text x="1842" y="817.5" text-anchor="end" font-size="19.8" fill="#1a1a1a" style="font-family:'DejaVu Sans',sans-serif">−0.1</text>
<path d="M1850 910 h8 M2625 910 h-8" stroke="#333" stroke-width="1.6"/>
<text x="1842" y="917.5" text-anchor="end" font-size="19.8" fill="#1a1a1a" style="font-family:'DejaVu Sans',sans-serif">−0.2</text>
<text x="1842" y="1017.5" text-anchor="end" font-size="19.8" fill="#1a1a1a" style="font-family:'DejaVu Sans',sans-serif">−0.3</text>
<text x="2237" y="402" text-anchor="middle" font-size="25" fill="#1a1a1a" style="font-family:'DejaVu Sans',sans-serif">AXES1 at gauge 32412</text>
<text x="2237" y="1064" text-anchor="middle" font-size="20.8" fill="#1a1a1a" style="font-family:'DejaVu Sans',sans-serif">time (hours)</text>
<rect x="2415" y="918" width="198" height="80" fill="#fff" stroke="#222" stroke-width="2.4"/>
<path d="M2431 938 H2468" stroke="#2222ff" stroke-width="2"/><path d="M2431 974 H2468" stroke="#10a010" stroke-width="2"/>
<text x="2492" y="946" font-size="25" fill="#1a1a1a" style="font-family:'DejaVu Sans',sans-serif">GeoClaw</text>
<text x="2492" y="982" font-size="25" fill="#1a1a1a" style="font-family:'DejaVu Sans',sans-serif">Obs</text>
</svg>
</div></div>
<div id="left">
<div class="hdr" style="top:0;height:49px"><div class="tri-d" style="left:14px;top:15px"></div><div class="t" style="top:8px;line-height:32px">Search</div></div>
<div class="abs" style="left:0;top:49px;width:626px;height:146px;background:#ebebeb"></div>
<div class="abs" style="left:12px;top:62px;width:489px;height:42px;background:#fff;border:2px solid #bcbcbc"></div>
<div class="btn" style="left:522px;top:64px;width:103px;height:38px;border-radius:5px;text-align:center;font-weight:bold;font-size:21.5px;line-height:32px;color:#1a1a1a">Search</div>
<div class="abs" style="left:12px;top:122px;font-size:21.8px;line-height:28px;color:#555">ex: 15213</div>
<div class="abs" style="left:370px;top:165px;font-size:22px;line-height:28px;font-weight:bold;color:#36599b;white-space:nowrap">Get Directions<span style="display:inline-block;width:20px"></span>History</div>
<div class="abs" style="left:306px;top:197px;width:12px;height:12px;border-radius:6px;background:#c9c9c9"></div>
<div class="hdr" style="top:209px;height:52px;border-top:2px solid #b9b9b9"><div class="tri-d" style="left:14px;top:17px"></div><div class="t" style="top:7px;line-height:32px">Places</div></div>
<div class="cb on" style="left:40px;top:265px"><svg width="27" height="27" viewBox="0 0 27 27"><path d="M6.6 15.4 L10.6 20 L21 7" fill="none" stroke="#fff" stroke-width="2.3" stroke-linecap="butt" stroke-linejoin="miter"/></svg></div><svg class="abs" style="left:68px;top:261px" width="32" height="32" viewBox="0 0 32 32" ><defs><linearGradient id="gg1" x1="0.2" y1="0" x2="0.6" y2="1"><stop offset="0" stop-color="#c3cff0"/><stop offset="0.35" stop-color="#6f88e0"/><stop offset="0.65" stop-color="#2344cc"/><stop offset="1" stop-color="#0a1fa4"/></linearGradient></defs><circle cx="16" cy="16" r="15" fill="url(#gg1)"/><path d="M4.5 8.5 Q16 7 29.8 19.5 L28.8 22.5 Q14 11.5 2.6 12.5 Z" fill="#ffffff" opacity=".95"/><path d="M4.5 23.5 Q16 20.5 27.5 23.8" fill="none" stroke="#ece4d4" stroke-width="1.5"/><path d="M7.5 27.6 Q16 25.5 24.5 27.8" fill="none" stroke="#e4dcd0" stroke-width="1.3"/><circle cx="16" cy="16" r="15" fill="none" stroke="#8ea0d8" stroke-width=".8" opacity=".7"/></svg><div class="row" style="left:112.5px;top:260px">My Places</div>
<div class="tg d" style="left:12px;top:302px"></div><div class="cb on" style="left:40px;top:301px"><svg width="27" height="27" viewBox="0 0 27 27"><rect x="5.8" y="11.8" width="16" height="4.1" rx=".6" fill="#fff"/></svg></div><svg class="abs" style="left:68px;top:302px" width="32" height="23" viewBox="0 0 32 23" ><defs><linearGradient id="gg2" x1="0" y1="0" x2="0" y2="1"><stop offset="0" stop-color="#eef3fc"/><stop offset="1" stop-color="#8399cc"/></linearGradient></defs><path d="M4.4 1.8 L17.2 0.9 L17.9 3.2 L31 3.6 L31 19.8 L9 20 Z" fill="#f4f7fd" stroke="#0c0c0c" stroke-width="1.7" stroke-linejoin="round"/><path d="M0.8 10.8 L8.2 11.1 L12.1 8.8 L21.3 8.8 L31 17.9 L31 20.8 L10.2 21.3 Z" fill="url(#gg2)" stroke="#0c0c0c" stroke-width="1.7" stroke-linejoin="round"/></svg><div class="row" style="left:112.5px;top:296px">Temporary Places</div>
<div class="tg d" style="left:36px;top:338px"></div><div class="cb on" style="left:64px;top:337px"><svg width="27" height="27" viewBox="0 0 27 27"><rect x="5.8" y="11.8" width="16" height="4.1" rx=".6" fill="#fff"/></svg></div><svg class="abs" style="left:92px;top:333px" width="32" height="32" viewBox="0 0 32 32" ><defs><linearGradient id="gg3" x1="0.2" y1="0" x2="0.6" y2="1"><stop offset="0" stop-color="#c3cff0"/><stop offset="0.35" stop-color="#6f88e0"/><stop offset="0.65" stop-color="#2344cc"/><stop offset="1" stop-color="#0a1fa4"/></linearGradient></defs><circle cx="16" cy="16" r="15" fill="url(#gg3)"/><path d="M4.5 8.5 Q16 7 29.8 19.5 L28.8 22.5 Q14 11.5 2.6 12.5 Z" fill="#ffffff" opacity=".95"/><path d="M4.5 23.5 Q16 20.5 27.5 23.8" fill="none" stroke="#ece4d4" stroke-width="1.5"/><path d="M7.5 27.6 Q16 25.5 24.5 27.8" fill="none" stroke="#e4dcd0" stroke-width="1.3"/><circle cx="16" cy="16" r="15" fill="none" stroke="#8ea0d8" stroke-width=".8" opacity=".7"/></svg><div class="row" style="left:136.5px;top:332px">Chile 2010</div>
<div class="tg d" style="left:60px;top:374px"></div><div class="cb on" style="left:88px;top:373px"><svg width="27" height="27" viewBox="0 0 27 27"><rect x="5.8" y="11.8" width="16" height="4.1" rx=".6" fill="#fff"/></svg></div><svg class="abs" style="left:116px;top:374px" width="32" height="23" viewBox="0 0 32 23" ><defs><linearGradient id="gg4" x1="0" y1="0" x2="0" y2="1"><stop offset="0" stop-color="#eef3fc"/><stop offset="1" stop-color="#8399cc"/></linearGradient></defs><path d="M4.4 1.8 L17.2 0.9 L17.9 3.2 L31 3.6 L31 19.8 L9 20 Z" fill="#f4f7fd" stroke="#0c0c0c" stroke-width="1.7" stroke-linejoin="round"/><path d="M0.8 10.8 L8.2 11.1 L12.1 8.8 L21.3 8.8 L31 17.9 L31 20.8 L10.2 21.3 Z" fill="url(#gg4)" stroke="#0c0c0c" stroke-width="1.7" stroke-linejoin="round"/></svg><div class="row" style="left:160.5px;top:368px">Figures</div>
<div class="tg r" style="left:86px;top:409px"></div><div class="cb on" style="left:112px;top:409px"><svg width="27" height="27" viewBox="0 0 27 27"><path d="M6.6 15.4 L10.6 20 L21 7" fill="none" stroke="#fff" stroke-width="2.3" stroke-linecap="butt" stroke-linejoin="miter"/></svg></div><svg class="abs" style="left:141px;top:404px" width="32" height="33" viewBox="0 0 32 33" ><defs><linearGradient id="gg5" x1="0" y1="0" x2="0" y2="1"><stop offset="0" stop-color="#ffffff"/><stop offset="0.45" stop-color="#d3def4"/><stop offset="1" stop-color="#6f8bc6"/></linearGradient><radialGradient id="gg5b" cx="0.45" cy="0.35" r="0.7"><stop offset="0" stop-color="#d0ffc0"/><stop offset="0.45" stop-color="#52cc44"/><stop offset="1" stop-color="#1c8a1c"/></radialGradient></defs><path d="M2.2 3.4 Q2.2 1 4.8 1 L12.2 1 L13.6 3.6 L2.2 3.6 Z" fill="#fff" stroke="#0c0c0c" stroke-width="1.8" stroke-linejoin="round"/><path d="M2.2 3.6 L29 3.6 L29 22.6 L2.2 22.6 Z" fill="url(#gg5)" stroke="#0c0c0c" stroke-width="1.9" stroke-linejoin="round"/><path d="M3.2 7.4 H13.4" stroke="#7d90c4" stroke-width="1.4"/><rect x="0" y="24.6" width="32" height="2.4" fill="#b9b9b9"/><rect x="0" y="27" width="32" height="2.4" fill="#6f6f6f"/><rect x="12.6" y="28" width="7" height="4" fill="#fff" stroke="#444" stroke-width="1.4"/><ellipse cx="16" cy="20.6" rx="6.4" ry="7.6" fill="url(#gg5b)" stroke="#123e12" stroke-width="1.2"/></svg><div class="row" style="left:184.5px;top:404px">Sea Surface (1)</div>
<div class="cb off" style="left:112px;top:445px"></div><svg class="abs" style="left:141px;top:440px" width="32" height="33" viewBox="0 0 32 33" ><defs><linearGradient id="gg6" x1="0" y1="0" x2="0" y2="1"><stop offset="0" stop-color="#ffffff"/><stop offset="0.45" stop-color="#d3def4"/><stop offset="1" stop-color="#6f8bc6"/></linearGradient><radialGradient id="gg6b" cx="0.45" cy="0.35" r="0.7"><stop offset="0" stop-color="#d0ffc0"/><stop offset="0.45" stop-color="#52cc44"/><stop offset="1" stop-color="#1c8a1c"/></radialGradient></defs><path d="M2.2 3.4 Q2.2 1 4.8 1 L12.2 1 L13.6 3.6 L2.2 3.6 Z" fill="#fff" stroke="#0c0c0c" stroke-width="1.8" stroke-linejoin="round"/><path d="M2.2 3.6 L29 3.6 L29 22.6 L2.2 22.6 Z" fill="url(#gg6)" stroke="#0c0c0c" stroke-width="1.9" stroke-linejoin="round"/><path d="M3.2 7.4 H13.4" stroke="#7d90c4" stroke-width="1.4"/><rect x="0" y="24.6" width="32" height="2.4" fill="#b9b9b9"/><rect x="0" y="27" width="32" height="2.4" fill="#6f6f6f"/><rect x="12.6" y="28" width="7" height="4" fill="#fff" stroke="#444" stroke-width="1.4"/><ellipse cx="16" cy="20.6" rx="6.4" ry="7.6" fill="url(#gg6b)" stroke="#123e12" stroke-width="1.2"/></svg><div class="row" style="left:184.5px;top:440px">Sea Surface (zoom) (2)</div>
<div class="tg d" style="left:60px;top:482px"></div><div class="cb on" style="left:88px;top:481px"><svg width="27" height="27" viewBox="0 0 27 27"><path d="M6.6 15.4 L10.6 20 L21 7" fill="none" stroke="#fff" stroke-width="2.3" stroke-linecap="butt" stroke-linejoin="miter"/></svg></div><svg class="abs" style="left:116px;top:476px" width="32" height="33" viewBox="0 0 32 33" ><defs><linearGradient id="gg7" x1="0" y1="0" x2="0" y2="1"><stop offset="0" stop-color="#ffffff"/><stop offset="0.45" stop-color="#d3def4"/><stop offset="1" stop-color="#6f8bc6"/></linearGradient><radialGradient id="gg7b" cx="0.45" cy="0.35" r="0.7"><stop offset="0" stop-color="#d0ffc0"/><stop offset="0.45" stop-color="#52cc44"/><stop offset="1" stop-color="#1c8a1c"/></radialGradient></defs><path d="M6 3.2 Q6 1 8.5 1 L15 1 L16.5 3.6 L31 3.6 L31 19 L27 19" fill="#8fa3d2" stroke="#0c0c0c" stroke-width="1.8" stroke-linejoin="round"/><path d="M1.5 8.5 Q1.5 6 4 6 L11 6 L13 8.8 L26.8 8.8 L26.8 23 L5.5 23 L1.5 12 Z" fill="url(#gg7)" stroke="#0c0c0c" stroke-width="1.9" stroke-linejoin="round"/><rect x="0" y="24.6" width="32" height="2.4" fill="#b9b9b9"/><rect x="0" y="27" width="32" height="2.4" fill="#6f6f6f"/><rect x="12.6" y="28" width="7" height="4" fill="#fff" stroke="#444" stroke-width="1.4"/><ellipse cx="16" cy="20.6" rx="6.4" ry="7.6" fill="url(#gg7b)" stroke="#123e12" stroke-width="1.2"/></svg><div class="row" style="left:160.5px;top:476px">Gauges</div>
<div class="cb on" style="left:112px;top:518px"><svg width="27" height="27" viewBox="0 0 27 27"><path d="M6.6 15.4 L10.6 20 L21 7" fill="none" stroke="#fff" stroke-width="2.3" stroke-linecap="butt" stroke-linejoin="miter"/></svg></div><svg class="abs" style="left:144px;top:513px" width="24" height="32" viewBox="0 0 24 32" ><defs><linearGradient id="gg8" x1="0" y1="0" x2="1" y2="1"><stop offset="0" stop-color="#f4ea50"/><stop offset=".5" stop-color="#f2e400"/><stop offset="1" stop-color="#d8c800"/></linearGradient></defs><path d="M7.7 22.5 L5.2 31" stroke="#8c8c8c" stroke-width="2" stroke-linecap="round"/><path d="M8.7 1 L16.4 0.6 L22.2 4.8 L21.3 8.2 L17.4 9.2 L16.9 13.1 L18.4 16.9 L16.4 22.7 L5.8 23.7 L1.9 17.9 L3.9 13.1 L9.7 12.1 L10.6 7.3 L8.2 4.8 Z" fill="url(#gg8)" stroke="#c0ae00" stroke-width="1" stroke-linejoin="round"/><path d="M10 2.4 L16 2.2 L20.4 5.4" fill="none" stroke="#fbf5a0" stroke-width="1.4"/></svg><div class="row lnk" style="left:184.5px;top:506px">Gauge 32412</div>
<div class="mono" style="left:184.5px;top:538px;height:30px">t1 = 0, t2 = 1e+10</div>
<div class="mono" style="left:184.5px;top:568px;height:23px">x1 = -86.392, y1 = -17.975</div>
<div class="abs" style="left:0;top:601px;width:626px;height:36px;background:#d8e9fc"></div><div class="tg d" style="left:60px;top:606px"></div><div class="cb off" style="left:88px;top:605px"></div><svg class="abs" style="left:116px;top:600px" width="32" height="33" viewBox="0 0 32 33" ><defs><linearGradient id="gg9" x1="0" y1="0" x2="0" y2="1"><stop offset="0" stop-color="#ffffff"/><stop offset="0.45" stop-color="#d3def4"/><stop offset="1" stop-color="#6f8bc6"/></linearGradient><radialGradient id="gg9b" cx="0.45" cy="0.35" r="0.7"><stop offset="0" stop-color="#d0ffc0"/><stop offset="0.45" stop-color="#52cc44"/><stop offset="1" stop-color="#1c8a1c"/></radialGradient></defs><path d="M6 3.2 Q6 1 8.5 1 L15 1 L16.5 3.6 L31 3.6 L31 19 L27 19" fill="#8fa3d2" stroke="#0c0c0c" stroke-width="1.8" stroke-linejoin="round"/><path d="M1.5 8.5 Q1.5 6 4 6 L11 6 L13 8.8 L26.8 8.8 L26.8 23 L5.5 23 L1.5 12 Z" fill="url(#gg9)" stroke="#0c0c0c" stroke-width="1.9" stroke-linejoin="round"/><rect x="0" y="24.6" width="32" height="2.4" fill="#b9b9b9"/><rect x="0" y="27" width="32" height="2.4" fill="#6f6f6f"/><rect x="12.6" y="28" width="7" height="4" fill="#fff" stroke="#444" stroke-width="1.4"/><ellipse cx="16" cy="20.6" rx="6.4" ry="7.6" fill="url(#gg9b)" stroke="#123e12" stroke-width="1.2"/></svg><div class="row" style="left:160.5px;top:600px">Regions</div>
<div class="cb off" style="left:112px;top:642px"></div><svg class="abs" style="left:140px;top:638px" width="32" height="31" viewBox="0 0 32 31" ><path d="M0 30 L0 14 L16 0 L31 0 L31 14 L15 30 Z" fill="#3f5f9f"/></svg><div class="row lnk" style="left:184.5px;top:630px">Computational Domain</div>
<div class="mono" style="left:184.5px;top:662px;height:30px">x1 = -120, x2 = -60</div>
<div class="mono" style="left:184.5px;top:692px;height:23px">y1 = -60, y2 = 0</div>
<div class="cb off" style="left:112px;top:730px"></div><svg class="abs" style="left:140px;top:726px" width="32" height="31" viewBox="0 0 32 31" ><path d="M0 30 L0 14 L16 0 L31 0 L31 14 L15 30 Z" fill="#000"/></svg><div class="row lnk" style="left:184.5px;top:718px">Region 0</div>
<div class="mono" style="left:184.5px;top:750px;height:30px">minlevel = 3, maxlevel = 3</div>
<div class="mono" style="left:184.5px;top:780px;height:23px">t1 = 0, t2 = 10000</div>
<div class="cb off" style="left:112px;top:818px"></div><svg class="abs" style="left:140px;top:814px" width="32" height="31" viewBox="0 0 32 31" ><path d="M0 30 L0 14 L16 0 L31 0 L31 14 L15 30 Z" fill="#000"/></svg><div class="row lnk" style="left:184.5px;top:806px">Region 1</div>
<div class="mono" style="left:184.5px;top:838px;height:30px">minlevel = 3, maxlevel = 3</div>
<div class="mono" style="left:184.5px;top:868px;height:23px">t1 = 8000, t2 = 26000</div>
<div class="tg d" style="left:60px;top:906px"></div><div class="cb on" style="left:88px;top:905px"><svg width="27" height="27" viewBox="0 0 27 27"><rect x="5.8" y="11.8" width="16" height="4.1" rx=".6" fill="#fff"/></svg></div><svg class="abs" style="left:116px;top:900px" width="32" height="33" viewBox="0 0 32 33" ><defs><linearGradient id="gg10" x1="0" y1="0" x2="0" y2="1"><stop offset="0" stop-color="#ffffff"/><stop offset="0.45" stop-color="#d3def4"/><stop offset="1" stop-color="#6f8bc6"/></linearGradient><radialGradient id="gg10b" cx="0.45" cy="0.35" r="0.7"><stop offset="0" stop-color="#d0ffc0"/><stop offset="0.45" stop-color="#52cc44"/><stop offset="1" stop-color="#1c8a1c"/></radialGradient></defs><path d="M6 3.2 Q6 1 8.5 1 L15 1 L16.5 3.6 L31 3.6 L31 19 L27 19" fill="#8fa3d2" stroke="#0c0c0c" stroke-width="1.8" stroke-linejoin="round"/><path d="M1.5 8.5 Q1.5 6 4 6 L11 6 L13 8.8 L26.8 8.8 L26.8 23 L5.5 23 L1.5 12 Z" fill="url(#gg10)" stroke="#0c0c0c" stroke-width="1.9" stroke-linejoin="round"/><rect x="0" y="24.6" width="32" height="2.4" fill="#b9b9b9"/><rect x="0" y="27" width="32" height="2.4" fill="#6f6f6f"/><rect x="12.6" y="28" width="7" height="4" fill="#fff" stroke="#444" stroke-width="1.4"/><ellipse cx="16" cy="20.6" rx="6.4" ry="7.6" fill="url(#gg10b)" stroke="#123e12" stroke-width="1.2"/></svg><div class="row" style="left:160.5px;top:900px">Levels</div>
<div class="tg r" style="left:86px;top:941px"></div><div class="cb off" style="left:112px;top:941px"></div><svg class="abs" style="left:142px;top:939px" width="29" height="23" viewBox="0 0 29 23" ><defs><linearGradient id="gg11" x1="0" y1="0" x2="0" y2="1"><stop offset="0" stop-color="#ffffff"/><stop offset="1" stop-color="#7089c4"/></linearGradient></defs><path d="M2 4 Q2 1.5 5 1.5 L10 1.5 Q12 1.5 12.5 4 L12.5 6 L2 6 Z" fill="#fff" stroke="#111" stroke-width="1.6"/><rect x="1.2" y="4.5" width="26" height="17" rx="2" fill="url(#gg11)" stroke="#111" stroke-width="1.7"/></svg><div class="row" style="left:184.5px;top:936px">Level 1</div>
<div class="tg r" style="left:86px;top:977px"></div><div class="cb on" style="left:112px;top:977px"><svg width="27" height="27" viewBox="0 0 27 27"><path d="M6.6 15.4 L10.6 20 L21 7" fill="none" stroke="#fff" stroke-width="2.3" stroke-linecap="butt" stroke-linejoin="miter"/></svg></div><svg class="abs" style="left:142px;top:975px" width="29" height="23" viewBox="0 0 29 23" ><defs><linearGradient id="gg12" x1="0" y1="0" x2="0" y2="1"><stop offset="0" stop-color="#ffffff"/><stop offset="1" stop-color="#7089c4"/></linearGradient></defs><path d="M2 4 Q2 1.5 5 1.5 L10 1.5 Q12 1.5 12.5 4 L12.5 6 L2 6 Z" fill="#fff" stroke="#111" stroke-width="1.6"/><rect x="1.2" y="4.5" width="26" height="17" rx="2" fill="url(#gg12)" stroke="#111" stroke-width="1.7"/></svg><div class="row" style="left:184.5px;top:972px">Level 2</div>
<div class="tg r" style="left:86px;top:1013px"></div><div class="cb on" style="left:112px;top:1013px"><svg width="27" height="27" viewBox="0 0 27 27"><path d="M6.6 15.4 L10.6 20 L21 7" fill="none" stroke="#fff" stroke-width="2.3" stroke-linecap="butt" stroke-linejoin="miter"/></svg></div><svg class="abs" style="left:142px;top:1011px" width="29" height="23" viewBox="0 0 29 23" ><defs><linearGradient id="gg13" x1="0" y1="0" x2="0" y2="1"><stop offset="0" stop-color="#ffffff"/><stop offset="1" stop-color="#7089c4"/></linearGradient></defs><path d="M2 4 Q2 1.5 5 1.5 L10 1.5 Q12 1.5 12.5 4 L12.5 6 L2 6 Z" fill="#fff" stroke="#111" stroke-width="1.6"/><rect x="1.2" y="4.5" width="26" height="17" rx="2" fill="url(#gg13)" stroke="#111" stroke-width="1.7"/></svg><div class="row" style="left:184.5px;top:1008px">Level 3</div>
<div class="abs" style="left:0;top:1494px;width:626px;height:56px;background:#ebebeb"></div>
<div class="abs" style="left:8px;top:1503px;width:60px;height:47px;border-radius:8px 0 0 8px;background:linear-gradient(#5d86c6,#3f69b0 55%,#6b97d6);border:1px solid #3c5f9e"></div>
<svg class="abs" style="left:21px;top:1506px" width="40" height="40" viewBox="0 0 40 40" ><circle cx="15" cy="14" r="10.5" fill="#dfe9f8" fill-opacity=".85" stroke="#f4f8ff" stroke-width="2.4"/><circle cx="15" cy="14" r="8" fill="none" stroke="#9db9e4" stroke-width="1.4"/><path d="M22 22 L30 33" stroke="#f4f8ff" stroke-width="4.5" stroke-linecap="round"/></svg>
<div class="btn" style="left:68px;top:1503px;width:60px;height:47px;border-radius:0 8px 8px 0;border-left:none"></div>
<div class="abs" style="left:82px;top:1513px;width:28px;height:28px;border:1.5px solid #4d74b8;background:linear-gradient(90deg,#ffffff,#6d92d0 60%,#4b76bf)"></div>
<div class="abs" style="left:136px;top:1506px;width:293px;height:42px;background:#fff;border:2px solid #bdbdbd"></div>
<div class="btn" style="left:432px;top:1503px;width:117px;height:47px"></div>
<div class="abs" style="left:489px;top:1504px;width:2px;height:45px;background:#bcbcbc"></div>
<svg class="abs" style="left:445px;top:1515px" width="30" height="24" viewBox="0 0 30 24" ><path d="M15 1 L28 14 L20 14 L20 23 L10 23 L10 14 L2 14 Z" fill="#777"/></svg>
<svg class="abs" style="left:503px;top:1515px" width="30" height="24" viewBox="0 0 30 24" ><path d="M15 23 L28 10 L20 10 L20 1 L10 1 L10 10 L2 10 Z" fill="#777"/></svg>
<div class="abs" style="left:306px;top:1552px;width:12px;height:12px;border-radius:6px;background:#c9c9c9"></div>
<div class="hdr" style="top:1564px;height:51px;border-top:2px solid #b9b9b9;background:linear-gradient(#fdfdfd,#f2f2f2 45%,#dcdcdc)"><div class="tri-r" style="left:16px;top:15px"></div><div class="t" style="top:8px;line-height:32px">Layers</div></div>
<div class="btn" style="left:424px;top:1569px;width:197px;height:43px;border-radius:9px"></div>
<div class="abs" style="left:431px;top:1574px;font-size:22px;line-height:32px;font-weight:bold;color:#111;white-space:nowrap">Earth Gallery</div>
<div class="abs" style="left:585px;top:1570px;font-size:30px;line-height:38px;font-weight:bold;color:#4a7cc4;letter-spacing:-3px">&raquo;</div>
</div>
<div id="split"><div class="abs" style="left:2px;top:802px;width:10px;height:10px;border-radius:5px;background:#cdcdcd"></div></div>
<div id="topbar">
<div class="abs" style="left:25px;top:1px;width:55px;height:44px;border-radius:7px;background:linear-gradient(#84abdf,#6a95d2 50%,#5a88c8);border:1px solid #5a86c6"></div>
<svg class="abs" style="left:35px;top:8px" width="36" height="30" viewBox="0 0 36 30"><rect x="1.5" y="1.5" width="32" height="27" fill="#fff"/><rect x="1.5" y="8" width="10" height="20.5" fill="#cfe0fb"/><path d="M1.5 8 H33.5 M12.3 8 V28.5" stroke="#6a95d2" stroke-width="2"/></svg>
<div class="btn" style="left:104px;top:1px;width:280px;height:44px;border-radius:6px;"></div>
<div class="abs" style="left:160px;top:2px;width:2px;height:42px;background:#bdbdbd"></div>
<div class="abs" style="left:216px;top:2px;width:2px;height:42px;background:#bdbdbd"></div>
<div class="abs" style="left:272px;top:2px;width:2px;height:42px;background:#bdbdbd"></div>
<div class="abs" style="left:328px;top:2px;width:2px;height:42px;background:#bdbdbd"></div>
<svg class="abs" style="left:112px;top:6px" width="44" height="36" viewBox="0 0 44 36"><defs><linearGradient id="pinY" x1="0" y1="0" x2="1" y2="1"><stop offset="0" stop-color="#fbf27a"/><stop offset=".5" stop-color="#f5e31e"/><stop offset="1" stop-color="#e4cf10"/></linearGradient></defs><path d="M15 2.8 L17.8 4.7 L17.5 10.9 L21.8 14.8 L31.3 14.3 L32.5 16.5 L27.4 22.1 L31.3 27.8 L29.7 28.3 L25.1 24.4 L19 30 L16.1 27.8 L16.7 18.2 L12.2 16 L6 13.7 L4.9 12 Z" fill="url(#pinY)" stroke="#a99708" stroke-width="1.5" stroke-linejoin="round"/><path d="M28 5.8 h10 M33 0.7999999999999998 v10" stroke="#444" stroke-width="1.6" fill="none"/></svg>
<svg class="abs" style="left:168px;top:6px" width="44" height="36" viewBox="0 0 44 36"><defs><linearGradient id="polG" x1="0" y1="1" x2="1" y2="0"><stop offset="0" stop-color="#b5c9ee"/><stop offset="1" stop-color="#eef3fc"/></linearGradient></defs><path d="M4 16.5 L14.7 5.3 L27.7 5.3 L27.7 17.6 L16.4 28.3 L4 28.3 Z" fill="url(#polG)" stroke="#7a9ad6" stroke-width="1.8" stroke-linejoin="round"/><path d="M32 5.8 h10 M37 0.7999999999999998 v10" stroke="#444" stroke-width="1.6" fill="none"/></svg>
<svg class="abs" style="left:224px;top:6px" width="44" height="36" viewBox="0 0 44 36"><path d="M17.8 12.6 Q24 13 27.5 18 M29.5 24.4 Q27 29.5 20 28.5 Q16 28 13.9 26" fill="none" stroke="#8eabe0" stroke-width="1.8"/><rect x="14" y="5.4" width="7.6" height="7.2" fill="#f4f7fd" stroke="#7a9ad6" stroke-width="1.7"/><rect x="6.1" y="19.4" width="7.6" height="7.6" fill="#f4f7fd" stroke="#7a9ad6" stroke-width="1.7"/><rect x="26.3" y="17.6" width="7.2" height="6.8" fill="#f4f7fd" stroke="#7a9ad6" stroke-width="1.7"/><path d="M30 5.8 h10 M35 0.7999999999999998 v10" stroke="#444" stroke-width="1.6" fill="none"/></svg>
<svg class="abs" style="left:280px;top:6px" width="44" height="36" viewBox="0 0 44 36"><defs><linearGradient id="ovG" x1="0" y1="0" x2="0" y2="1"><stop offset="0" stop-color="#ffffff"/><stop offset=".55" stop-color="#dfe8f8"/><stop offset="1" stop-color="#8fb0e4"/></linearGradient></defs><path d="M2.4 23.3 L12.5 32.3 L31.6 21.6 L29.4 18.2 L15.9 25 Z" fill="#4f7fca"/><path d="M4.1 15.4 L23.2 4.1 L34.5 13.1 L15.9 24.4 Z" fill="url(#ovG)" stroke="#86a5dc" stroke-width="1.5" stroke-dasharray="2.5 1.6"/><path d="M31.799999999999997 5.8 h10 M36.8 0.7999999999999998 v10" stroke="#444" stroke-width="1.6" fill="none"/></svg>
<svg class="abs" style="left:336px;top:6px" width="44" height="36" viewBox="0 0 44 36"><rect x="8.3" y="12" width="18" height="15.8" rx="2.5" fill="#86a6de"/><rect x="10.2" y="17.5" width="14.5" height="4.2" fill="#e6edfa"/><rect x="10.2" y="23" width="14.5" height="2.2" fill="#b9ccee"/><path d="M26.3 15.5 L33 13.7 L35.9 13.7 L35.9 22.7 L33 22.7 L26.3 21 Z" fill="#86a6de"/><rect x="3.8" y="15.4" width="4.8" height="5.6" fill="#86a6de"/><rect x="10.5" y="7.5" width="14.7" height="1.8" fill="#86a6de"/><rect x="13.9" y="13.1" width="4" height="4" fill="#e01824"/><rect x="17.9" y="13.1" width="8.4" height="4" fill="#ffffff"/><rect x="11.7" y="26.6" width="16.9" height="2.4" fill="#7398d8"/><path d="M32 5.8 h10 M37 0.7999999999999998 v10" stroke="#444" stroke-width="1.6" fill="none"/></svg>
<div class="btn" style="left:408px;top:1px;width:112px;height:44px;border-radius:6px;"></div>
<div class="abs" style="left:463px;top:2px;width:2px;height:42px;background:#bdbdbd"></div>
<svg class="abs" style="left:416px;top:4px" width="44" height="40" viewBox="0 0 44 40"><defs><radialGradient id="hcl" cx=".6" cy=".45" r=".7"><stop offset="0" stop-color="#e4edfb"/><stop offset=".6" stop-color="#b3c9f0"/><stop offset="1" stop-color="#7d9fe0"/></radialGradient></defs><path d="M33 6.5 C22 -1 6 6 6.5 21 L2.5 21 L9 30.5 L16.5 21 L12 21 C12 11 22 6 30 11 Z" fill="#12a01c" stroke="#0b7a14" stroke-width="1"/><circle cx="24.5" cy="21.5" r="12.6" fill="url(#hcl)" stroke="#5f86d4" stroke-width="1.8"/><path d="M24.5 21.5 L13.5 17 A12 12 0 0 1 24.5 9.5 Z" fill="#ffffff" opacity=".95"/><path d="M25 11 L24.5 22 L20 27" fill="none" stroke="#0e2f8e" stroke-width="2.2"/><path d="M31 21.5 h3.5 M24.5 29 v3.5 M15 21.5 h2" stroke="#5f86d4" stroke-width="1.4"/></svg>
<svg class="abs" style="left:472px;top:5px" width="44" height="38" viewBox="0 0 44 38"><path d="M22 3 v4.5 M14.5 5.5 l2.2 4 M29.5 5.5 l-2.2 4 M9.5 11 l3.6 2.6 M34.5 11 l-3.6 2.6 M7.5 17.5 h4.5 M36.5 17.5 h-4.5" stroke="#cf9a6c" stroke-width="2"/><circle cx="22" cy="17" r="7.6" fill="#eec98f"/><circle cx="22" cy="17" r="6.1" fill="#f7d93a"/><path d="M1.7 29.3 L11.3 19.8 L18 22.6 L24.3 24.8 L32.7 22 L39.4 29.3 Z" fill="#135a2b"/></svg>
<div class="btn" style="left:545px;top:1px;width:54px;height:44px;border-radius:6px;"></div>
<svg class="abs" style="left:550px;top:5px" width="48" height="38" viewBox="0 0 48 38"><defs><radialGradient id="plG" cx=".4" cy=".3" r=".8"><stop offset="0" stop-color="#f8d27a"/><stop offset=".55" stop-color="#f0a838"/><stop offset="1" stop-color="#e08428"/></radialGradient></defs><ellipse cx="21" cy="18.6" rx="18" ry="5.2" fill="none" stroke="#c47e3e" stroke-width="2" transform="rotate(-29 21 18.6)"/><circle cx="21" cy="18.6" r="11.8" fill="url(#plG)" stroke="#d08a48" stroke-width="1"/><path d="M7 25 C14 24 28 17 33 11" fill="none" stroke="#b9772e" stroke-width="2"/><path d="M34 26.5 h9.6 l-4.8 5.2 z" fill="#555"/></svg>
<div class="btn" style="left:625px;top:1px;width:54px;height:44px;border-radius:6px;"></div>
<svg class="abs" style="left:645px;top:6px" width="16" height="34" viewBox="0 0 16 34"><rect x="1" y="1" width="13" height="31" fill="#6f98da" stroke="#4a77c4" stroke-width="1.5"/><path d="M7 6 h7 M9 10 h5 M7 14 h7 M9 18 h5 M7 22 h7 M9 26 h5" stroke="#e8f0fd" stroke-width="1.6"/></svg>
<div class="btn" style="left:705px;top:1px;width:222px;height:44px;border-radius:6px;"></div>
<div class="abs" style="left:760px;top:2px;width:2px;height:42px;background:#bdbdbd"></div>
<div class="abs" style="left:816px;top:2px;width:2px;height:42px;background:#bdbdbd"></div>
<div class="abs" style="left:872px;top:2px;width:2px;height:42px;background:#bdbdbd"></div>
<svg class="abs" style="left:714px;top:10px" width="38" height="28" viewBox="0 0 38 28"><rect x="1.5" y="1.5" width="34" height="24" fill="#eaf1fd" stroke="#7fa2de" stroke-width="2"/><path d="M4 5 L16 13.5 L4 22 M33 5 L21 13.5 L33 22 M16 13.5 H21" fill="none" stroke="#6f94d6" stroke-width="1.8"/></svg>
<svg class="abs" style="left:771px;top:8px" width="36" height="32" viewBox="0 0 36 32"><rect x="8" y="1" width="18" height="18" fill="#fff" stroke="#7fa2de" stroke-width="1.6"/><path d="M11 6 h12 M11 10 h12 M11 14 h6" stroke="#666" stroke-width="1.6"/><path d="M2 18 H32 V29 H2 Z" fill="#6f98da" stroke="#4a77c4" stroke-width="1.5"/><path d="M2 18 L8 13 H26 L32 18" fill="#9bb8ea" stroke="#4a77c4" stroke-width="1.2"/><rect x="7" y="23" width="5" height="2.5" fill="#e02020"/></svg>
<svg class="abs" style="left:833px;top:8px" width="26" height="32" viewBox="0 0 26 32"><path d="M1 1 H15 L23 9 V29 H1 Z" fill="#f1e3c0" stroke="#4a77c4" stroke-width="1.6"/><path d="M1 17 H23 V29 H1 Z" fill="#6f98da"/><path d="M15 1 V9 H23" fill="#fff" stroke="#4a77c4" stroke-width="1.2"/><path d="M10 4 C5 6 8 14 12 19 L14 12 Z" fill="#a01818"/><circle cx="16" cy="20" r="3.5" fill="#f2b63a"/></svg>
<svg class="abs" style="left:883px;top:10px" width="36" height="28" viewBox="0 0 36 28"><rect x="1" y="1" width="32" height="24" fill="#a9c7ee" stroke="#8c8c8c" stroke-width="2"/><rect x="16" y="3" width="15" height="12" fill="#f7e487"/><rect x="3" y="12" width="12" height="4" fill="#777"/><rect x="19" y="8" width="4" height="5" fill="#6a1030"/><rect x="20" y="15" width="10" height="8" fill="#fdf6d0"/><rect x="3" y="18" width="14" height="5" fill="#7fb2e6"/><rect x="26" y="17" width="3" height="3" fill="#111"/></svg>
<div class="btn" style="left:1930px;top:1px;width:300px;height:44px;border-radius:7px;"></div>
<div class="abs" style="left:1921px;top:5px;width:300px;text-align:center;font-size:22px;line-height:32px;font-weight:bold;color:#1a1a1a">Sign in</div>
</div>
<div id="botline"></div>
</body></html>
